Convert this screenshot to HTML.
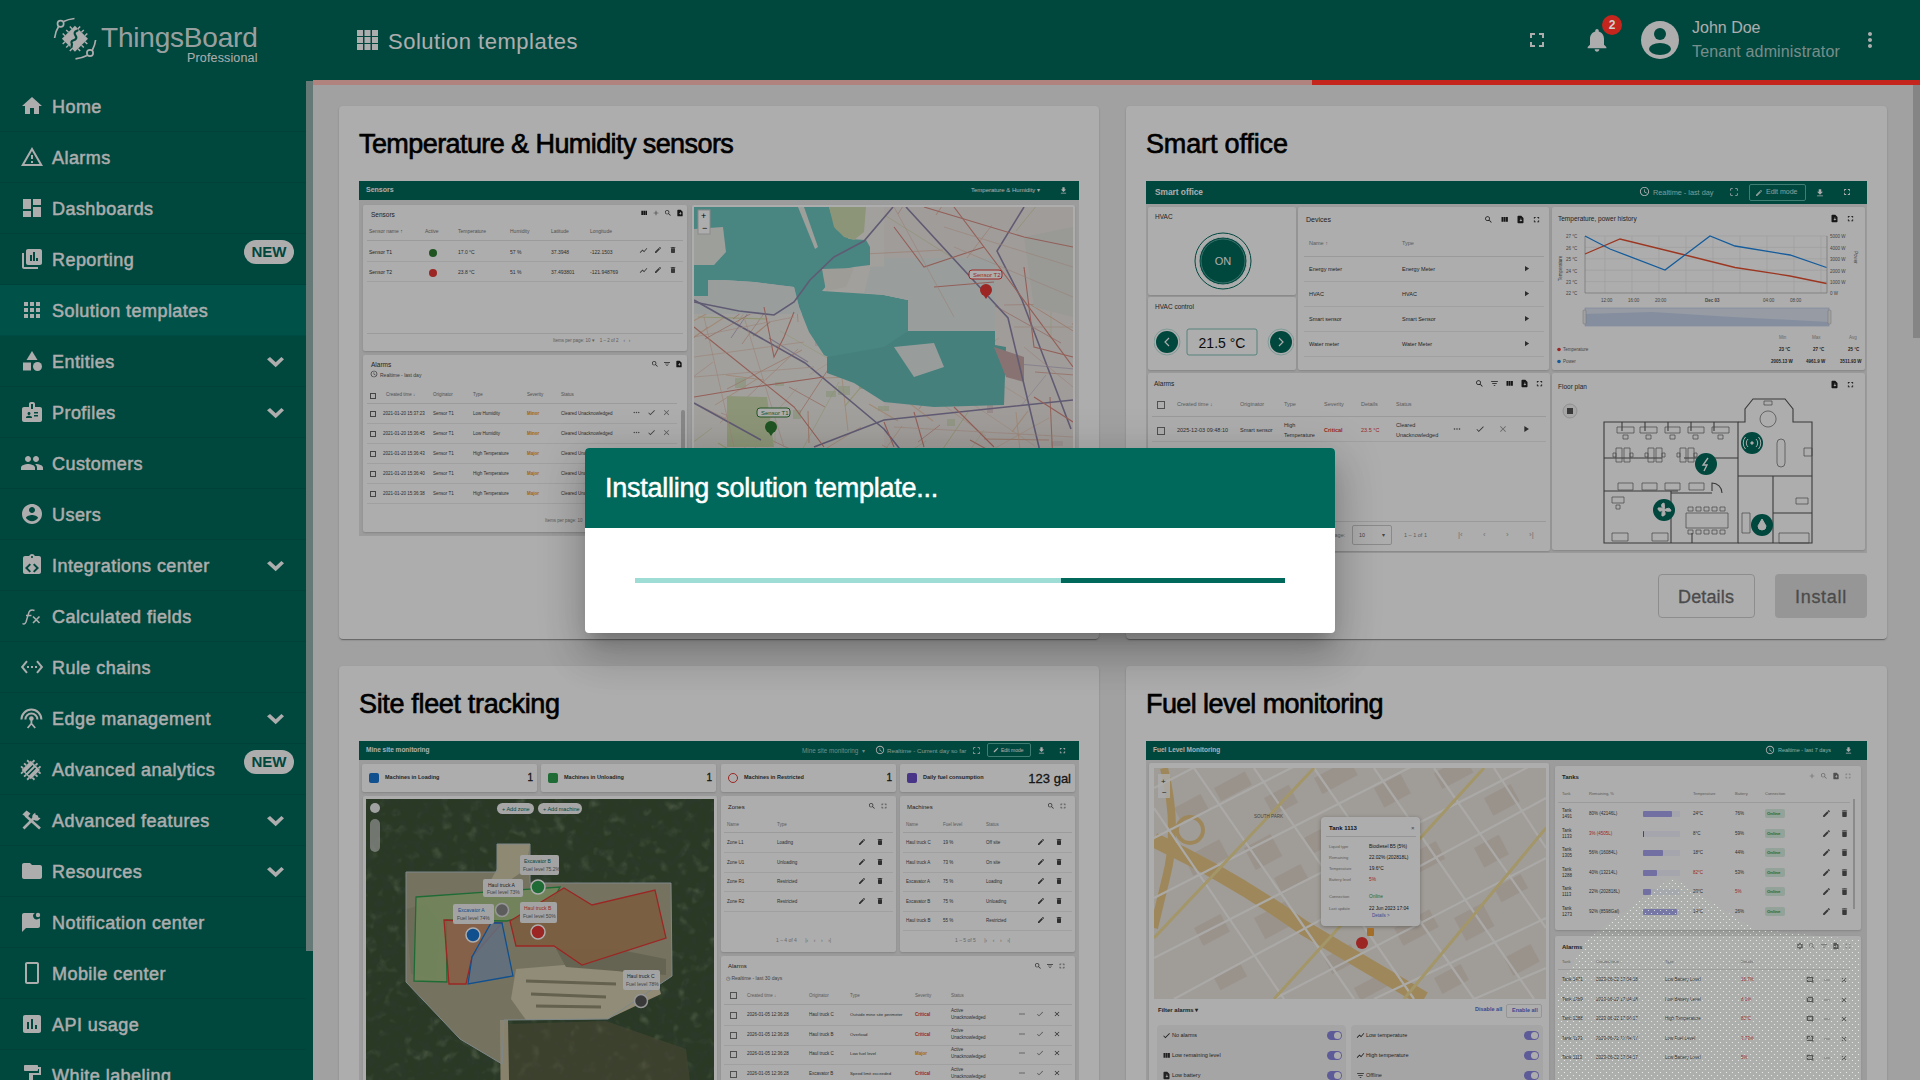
<!DOCTYPE html>
<html><head><meta charset="utf-8">
<style>
*{box-sizing:border-box;margin:0;padding:0}
html,body{width:1920px;height:1080px;overflow:hidden;font-family:"Liberation Sans",sans-serif;background:#eeeeee}
.abs{position:absolute}
#hdr{position:absolute;left:0;top:0;width:1920px;height:80px;background:#00695c;color:#fff}
#side{position:absolute;left:0;top:80px;width:306px;height:1000px;background:#00695c;color:#fff;overflow:hidden}
.mi{position:absolute;left:0;width:306px;height:51px;border-bottom:1px solid rgba(0,0,0,0.08)}
.mi .t{position:absolute;left:52px;top:15.5px;font-size:18px;letter-spacing:0.45px;-webkit-text-stroke:0.45px #fff;white-space:nowrap}
.mi svg{position:absolute;left:20px;top:13px;width:24px;height:24px;fill:#fff}
.mi .chev{left:263px;top:14px}
.new{position:absolute;left:244px;top:6px;width:50px;height:24px;border-radius:12px;background:#fff;color:#00695c;font-size:15px;font-weight:bold;text-align:center;line-height:24px}
#sscroll{position:absolute;left:306px;top:80px;width:7px;height:1000px;background:#00695c}
#sthumb{position:absolute;left:306px;top:81px;width:7px;height:870px;background:#96b4af}
#content{position:absolute;left:313px;top:80px;width:1607px;height:1000px;background:#eeeeee;overflow:hidden}
#prog{position:absolute;left:313px;top:80px;width:1607px;height:5px;background:#b0837f}
#progbar{position:absolute;left:1312px;top:80px;width:608px;height:5px;background:#c4261e}
#mscroll{position:absolute;left:1913px;top:85px;width:7px;height:253px;background:#c4c4c4}
.card{position:absolute;background:#fff;border-radius:4px;box-shadow:0 2px 1px -1px rgba(0,0,0,.2),0 1px 1px 0 rgba(0,0,0,.14),0 1px 3px 0 rgba(0,0,0,.12)}
.ctitle{position:absolute;left:20px;top:23px;font-size:27px;color:#000;white-space:nowrap;-webkit-text-stroke:0.65px #000}
.prev{position:absolute;left:20px;top:75px;background:#e6e6e6;overflow:hidden}
.ph{position:absolute;left:0;top:0;width:100%;background:#00695c;color:#fff;font-weight:bold}
.pan{position:absolute;background:#fff;border-radius:2px;box-shadow:0 1px 2px rgba(0,0,0,.15);overflow:hidden}
.tx{position:absolute;white-space:nowrap;font-size:7px;color:#333}
#overlay{position:absolute;left:0;top:0;width:1920px;height:1080px;background:rgba(0,0,0,0.32)}
#dlg{position:absolute;left:585px;top:448px;width:750px;height:185px;background:#fff;border-radius:4px;overflow:hidden;box-shadow:0 11px 15px -7px rgba(0,0,0,.2),0 24px 38px 3px rgba(0,0,0,.14),0 9px 46px 8px rgba(0,0,0,.12)}
#dlgh{position:absolute;left:0;top:0;width:750px;height:80px;background:#00695c}
#dlgt{position:absolute;left:20px;top:25px;font-size:27px;color:#fff;white-space:nowrap;letter-spacing:-0.25px;-webkit-text-stroke:0.5px #fff}
#dbuf{position:absolute;left:50px;top:130px;width:650px;height:5px;background:#9edcd6}
#dbar{position:absolute;left:476px;top:130px;width:224px;height:5px;background:#00695c}
</style></head><body>

<div id="hdr">
  <!-- logo -->
  <svg class="abs" style="left:52px;top:16px" width="48" height="48" viewBox="0 0 48 48" fill="none" stroke="#fff">
    <circle cx="8.6" cy="7.8" r="3.1" stroke-width="1.7"/>
    <path d="M11.6 5.6 Q16 3.2 22.5 2.5" stroke-width="1.7"/>
    <path d="M6.6 10.6 Q3.6 15 2.6 22" stroke-width="1.7"/>
    <circle cx="38" cy="37" r="3.1" stroke-width="1.7"/>
    <path d="M35 39.4 Q30 42 23.5 42.8" stroke-width="1.7"/>
    <path d="M40.4 34 Q43 29 43.6 24" stroke-width="1.7"/>
    <rect x="13.8" y="13.6" width="18.4" height="18.4" fill="#fff" stroke="none" transform="rotate(45 23 22.75)"/>
    <path d="M33.0 25.7 L35.3 28.0 M29.5 29.3 L31.8 31.5 M26.0 32.8 L28.2 35.1 M20.0 32.8 L17.8 35.1 M16.5 29.3 L14.2 31.5 M13.0 25.7 L10.7 28.0 M13.0 19.8 L10.7 17.5 M16.5 16.2 L14.2 14.0 M20.0 12.7 L17.8 10.4 M26.0 12.7 L28.2 10.4 M29.5 16.2 L31.8 14.0 M33.0 19.8 L35.3 17.5" stroke-width="1.5"/>
    <path d="M25.5 14.5 Q21 16 23.5 19.5 Q26 23 21 24.5 Q18.5 25.5 20 28 L19.5 31" stroke="#00695c" stroke-width="2.2" stroke-linecap="round"/>
  </svg>
  <div class="abs" style="left:101px;top:22px;font-size:28px;letter-spacing:-0.2px;color:rgba(255,255,255,0.9);white-space:nowrap">ThingsBoard</div>
  <div class="abs" style="left:187px;top:51px;font-size:12.5px;letter-spacing:0.15px;color:#fff;white-space:nowrap">Professional</div>
  <!-- title -->
  <svg class="abs" style="left:357px;top:30px" width="21" height="20" viewBox="0 0 21 20" fill="#fff">
    <rect x="0" y="0" width="6" height="6"/><rect x="7.5" y="0" width="6" height="6"/><rect x="15" y="0" width="6" height="6"/>
    <rect x="0" y="7" width="6" height="6"/><rect x="7.5" y="7" width="6" height="6"/><rect x="15" y="7" width="6" height="6"/>
    <rect x="0" y="14" width="6" height="6"/><rect x="7.5" y="14" width="6" height="6"/><rect x="15" y="14" width="6" height="6"/>
  </svg>
  <div class="abs" style="left:388px;top:29px;font-size:22px;letter-spacing:0.5px;color:#fff;white-space:nowrap">Solution templates</div>
  <!-- fullscreen -->
  <svg class="abs" style="left:1525px;top:28px" width="24" height="24" viewBox="0 0 24 24" fill="#fff"><path d="M7 14H5v5h5v-2H7v-3zm-2-4h2V7h3V5H5v5zm12 7h-3v2h5v-5h-2v3zM14 5v2h3v3h2V5h-5z"/></svg>
  <!-- bell -->
  <svg class="abs" style="left:1583px;top:26px" width="28" height="28" viewBox="0 0 24 24" fill="#fff"><path d="M12 22c1.1 0 2-.9 2-2h-4c0 1.1.89 2 2 2zm6-6v-5c0-3.07-1.64-5.64-4.5-6.32V4c0-.83-.67-1.5-1.5-1.5s-1.5.67-1.5 1.5v.68C7.63 5.36 6 7.92 6 11v5l-2 2v1h16v-1l-2-2z"/></svg>
  
  <!-- avatar -->
  <svg class="abs" style="left:1640px;top:20px" width="40" height="40" viewBox="0 0 40 40"><circle cx="20" cy="20" r="19" fill="#fff"/><circle cx="20" cy="14" r="6" fill="#00695c"/><ellipse cx="20" cy="29" rx="11" ry="6" fill="#00695c"/></svg>
  <div class="abs" style="left:1692px;top:19px;font-size:16px;color:#fff;white-space:nowrap">John Doe</div>
  <div class="abs" style="left:1692px;top:43px;font-size:16px;letter-spacing:0.15px;color:rgba(255,255,255,0.7);white-space:nowrap">Tenant administrator</div>
  <svg class="abs" style="left:1858px;top:28px" width="24" height="24" viewBox="0 0 24 24" fill="#fff"><path d="M12 8c1.1 0 2-.9 2-2s-.9-2-2-2-2 .9-2 2 .9 2 2 2zm0 2c-1.1 0-2 .9-2 2s.9 2 2 2 2-.9 2-2-.9-2-2-2zm0 6c-1.1 0-2 .9-2 2s.9 2 2 2 2-.9 2-2-.9-2-2-2z"/></svg>
</div>

<div id="side">
<div class="mi" style="top:1px"><svg viewBox="0 0 24 24"><path d="M10 20v-6h4v6h5v-8h3L12 3 2 12h3v8z"/></svg><div class="t">Home</div></div>
<div class="mi" style="top:52px"><svg viewBox="0 0 24 24"><path d="M12 5.99L19.53 19H4.47L12 5.99M12 2L1 21h22L12 2zm1 14h-2v2h2v-2zm0-6h-2v4h2v-4z"/></svg><div class="t">Alarms</div></div>
<div class="mi" style="top:103px"><svg viewBox="0 0 24 24"><path d="M3 13h8V3H3v10zm0 8h8v-6H3v6zm10 0h8V11h-8v10zm0-18v6h8V3h-8z"/></svg><div class="t">Dashboards</div></div>
<div class="mi" style="top:154px"><svg viewBox="0 0 24 24"><path d="M4 6H2v14c0 1.1.9 2 2 2h14v-2H4V6zm16-4H8c-1.1 0-2 .9-2 2v12c0 1.1.9 2 2 2h12c1.1 0 2-.9 2-2V4c0-1.1-.9-2-2-2zm-8 12h-2V8h2v6zm3 0h-2V5h2v9zm3 0h-2v-3h2v3z"/></svg><div class="t">Reporting</div><div class="new">NEW</div></div>
<div class="mi" style="top:205px;background:#00796b"><svg viewBox="0 0 24 24"><path d="M4 8h4V4H4v4zm6 12h4v-4h-4v4zm-6 0h4v-4H4v4zm0-6h4v-4H4v4zm6 0h4v-4h-4v4zm6-10v4h4V4h-4zm-6 4h4V4h-4v4zm6 6h4v-4h-4v4zm0 6h4v-4h-4v4z"/></svg><div class="t">Solution templates</div></div>
<div class="mi" style="top:256px"><svg viewBox="0 0 24 24"><path d="M12 2l-5.5 9h11z"/><circle cx="17.5" cy="17.5" r="4.5"/><path d="M3 13.5h8v8H3z"/></svg><div class="t">Entities</div><svg class="chev" viewBox="0 0 24 24"><path d="M4 9.3L7 7L12.7 12.2L18.4 7L21 9.3L12.7 17.2Z"/></svg></div>
<div class="mi" style="top:307px"><svg viewBox="0 0 24 24"><path d="M20 7h-5V4c0-1.1-.9-2-2-2h-2c-1.1 0-2 .9-2 2v3H4c-1.1 0-2 .9-2 2v11c0 1.1.9 2 2 2h16c1.1 0 2-.9 2-2V9c0-1.1-.9-2-2-2zM9 12c.83 0 1.5.67 1.5 1.5S9.83 15 9 15s-1.5-.67-1.5-1.5S8.17 12 9 12zm3 6H6v-.75c0-1 2-1.5 3-1.5s3 .5 3 1.5V18zm1-9h-2V4h2v5zm5 7.5h-4V15h4v1.5zm0-3h-4V12h4v1.5z"/></svg><div class="t">Profiles</div><svg class="chev" viewBox="0 0 24 24"><path d="M4 9.3L7 7L12.7 12.2L18.4 7L21 9.3L12.7 17.2Z"/></svg></div>
<div class="mi" style="top:358px"><svg viewBox="0 0 24 24"><path d="M16 11c1.66 0 2.99-1.34 2.99-3S17.66 5 16 5c-1.66 0-3 1.34-3 3s1.34 3 3 3zm-8 0c1.66 0 2.99-1.34 2.99-3S9.66 5 8 5C6.34 5 5 6.34 5 8s1.34 3 3 3zm0 2c-2.33 0-7 1.17-7 3.5V19h14v-2.5c0-2.33-4.67-3.5-7-3.5zm8 0c-.29 0-.62.02-.97.05 1.16.84 1.97 1.97 1.97 3.45V19h6v-2.5c0-2.33-4.67-3.5-7-3.5z"/></svg><div class="t">Customers</div></div>
<div class="mi" style="top:409px"><svg viewBox="0 0 24 24"><path d="M12 2C6.48 2 2 6.48 2 12s4.48 10 10 10 10-4.48 10-10S17.52 2 12 2zm0 3c1.66 0 3 1.34 3 3s-1.34 3-3 3-3-1.34-3-3 1.34-3 3-3zm0 14.2c-2.5 0-4.71-1.28-6-3.22.03-1.99 4-3.08 6-3.08 1.99 0 5.97 1.09 6 3.08-1.29 1.94-3.5 3.22-6 3.22z"/></svg><div class="t">Users</div></div>
<div class="mi" style="top:460px"><svg viewBox="0 0 24 24"><path d="M19 3h-4.18C14.4 1.84 13.3 1 12 1c-1.3 0-2.4.84-2.82 2H5c-1.1 0-2 .9-2 2v14c0 1.1.9 2 2 2h14c1.1 0 2-.9 2-2V5c0-1.1-.9-2-2-2zm-8 15.17l-1.41 1.41L5 15l4.59-4.59L11 11.83 7.83 15 11 18.17zm3.41 1.42L13 18.17 16.17 15 13 11.83l1.41-1.42L19 15l-4.59 4.59zM12 5c-.55 0-1-.45-1-1s.45-1 1-1 1 .45 1 1-.45 1-1 1z"/></svg><div class="t">Integrations center</div><svg class="chev" viewBox="0 0 24 24"><path d="M4 9.3L7 7L12.7 12.2L18.4 7L21 9.3L12.7 17.2Z"/></svg></div>
<div class="mi" style="top:511px"><svg viewBox="0 0 24 24"><path d="M2.5 19.5 Q4.5 21 6 18 L9 8 Q10.5 5 14.5 6.5 M6 11.5 H11.5" fill="none" stroke="#fff" stroke-width="1.5"/><path d="M13 12.5 L19.5 19 M19.5 12.5 L13 19" fill="none" stroke="#fff" stroke-width="1.6"/></svg><div class="t">Calculated fields</div></div>
<div class="mi" style="top:562px"><svg viewBox="0 0 24 24"><path d="M7.77 6.76L6.23 5.48.82 12l5.41 6.52 1.54-1.28L3.42 12l4.35-5.24zM7 13h2v-2H7v2zm10-2h-2v2h2v-2zm-6 2h2v-2h-2v2zm6.77-7.52l-1.54 1.28L20.58 12l-4.35 5.24 1.54 1.28L23.18 12l-5.41-6.52z"/></svg><div class="t">Rule chains</div></div>
<div class="mi" style="top:613px"><svg viewBox="0 0 24 24"><path d="M1.4 13.5a10 10 0 0 1 20 0" fill="none" stroke="#fff" stroke-width="2"/><path d="M5.4 13.5a6 6 0 0 1 12 0" fill="none" stroke="#fff" stroke-width="2"/><circle cx="11.4" cy="12.5" r="2.3"/><path d="M11.4 13v4.5L7.6 22M11.4 17.5L15.2 22" fill="none" stroke="#fff" stroke-width="1.8"/></svg><div class="t">Edge management</div><svg class="chev" viewBox="0 0 24 24"><path d="M4 9.3L7 7L12.7 12.2L18.4 7L21 9.3L12.7 17.2Z"/></svg></div>
<div class="mi" style="top:664px"><svg viewBox="0 0 24 24"><g transform="rotate(45 10.8 13)"><rect x="4.3" y="6.5" width="13" height="13"/><path d="M6.5 3.5v3M10.8 3.5v3M15.1 3.5v3M6.5 19.5v3M10.8 19.5v3M15.1 19.5v3M1.3 8.7h3M1.3 13h3M1.3 17.3h3M17.3 8.7h3M17.3 13h3M17.3 17.3h3" stroke="#fff" stroke-width="1.8"/></g><path d="M6 15.5L13 8.5M8.5 18L15.5 11" stroke="#00695c" stroke-width="1.6"/></svg><div class="t">Advanced analytics</div><div class="new">NEW</div></div>
<div class="mi" style="top:715px"><svg viewBox="0 0 24 24"><path d="M5.5 7.5L20 20.5" stroke="#fff" stroke-width="2.6"/><path d="M2.4 6.5L6.5 2.5L10.5 5.5L7 9.5Z"/><path d="M3.5 20.5L15 9" stroke="#fff" stroke-width="2.6"/><path d="M13.2 6.3a4 4 0 0 0 5.6 5.6l1.8-1.8-2-.4-.8-2.2-2.2-.8-.4-2Z"/></svg><div class="t">Advanced features</div><svg class="chev" viewBox="0 0 24 24"><path d="M4 9.3L7 7L12.7 12.2L18.4 7L21 9.3L12.7 17.2Z"/></svg></div>
<div class="mi" style="top:766px"><svg viewBox="0 0 24 24"><path d="M10 4H4c-1.1 0-1.99.9-1.99 2L2 18c0 1.1.9 2 2 2h16c1.1 0 2-.9 2-2V8c0-1.1-.9-2-2-2h-8l-2-2z"/></svg><div class="t">Resources</div><svg class="chev" viewBox="0 0 24 24"><path d="M4 9.3L7 7L12.7 12.2L18.4 7L21 9.3L12.7 17.2Z"/></svg></div>
<div class="mi" style="top:817px"><svg viewBox="0 0 24 24"><path d="M18 9a3 3 0 0 0 2-.8V16c0 1.1-.9 2-2 2H6l-4 4V5c0-1.1.9-2 2-2h11a3 3 0 0 0 3 6z"/><circle cx="18" cy="5" r="2.2"/></svg><div class="t">Notification center</div></div>
<div class="mi" style="top:868px"><svg viewBox="0 0 24 24"><path d="M17 1.01L7 1c-1.1 0-2 .9-2 2v18c0 1.1.9 2 2 2h10c1.1 0 2-.9 2-2V3c0-1.1-.9-1.99-2-1.99zM17 21H7V3h10v18z"/></svg><div class="t">Mobile center</div></div>
<div class="mi" style="top:919px"><svg viewBox="0 0 24 24"><path d="M19 3H5c-1.1 0-2 .9-2 2v14c0 1.1.9 2 2 2h14c1.1 0 2-.9 2-2V5c0-1.1-.9-2-2-2zM9 17H7v-7h2v7zm4 0h-2V7h2v10zm4 0h-2v-4h2v4z"/></svg><div class="t">API usage</div></div>
<div class="mi" style="top:970px"><svg viewBox="0 0 24 24"><path d="M18 4V3c0-.55-.45-1-1-1H5c-.55 0-1 .45-1 1v4c0 .55.45 1 1 1h12c.55 0 1-.45 1-1V6h1v4H9v11c0 .55.45 1 1 1h2c.55 0 1-.45 1-1v-9h8V4h-3z"/></svg><div class="t">White labeling</div></div>
</div>
<div id="sscroll"></div><div id="sthumb"></div>

<div id="content">
<div class="card" style="left:26px;top:26px;width:760px;height:533px">
<div class="ctitle" style="letter-spacing:-0.58px">Temperature &amp; Humidity sensors</div>
<div class="prev" style="width:720px;height:355px">
<div class="ph" style="height:19px"></div>
<div class="tx" style="left:7px;top:5px;font-size:7px;color:#fff;font-weight:bold;">Sensors</div>
<div class="tx" style="left:612px;top:5px;font-size:6px;color:#fff;">Temperature &amp; Humidity ▾</div>
<svg class="abs" style="left:700px;top:5px" width="9" height="9" viewBox="0 0 24 24"><path d="M19 9h-4V3H9v6H5l7 7 7-7zM5 18v2h14v-2H5z" fill="#fff"/></svg>
<div class="pan" style="left:4px;top:24px;width:324px;height:146px">
<div class="tx" style="left:8px;top:6px;font-size:6.5px;color:#333;">Sensors</div>
<svg class="abs" style="left:277px;top:4px" width="8" height="8" viewBox="0 0 24 24"><path d="M10 18h5V5h-5v13zm-6 0h5V5H4v13zM16 5v13h5V5h-5z" fill="#222"/></svg>
<svg class="abs" style="left:289px;top:4px" width="8" height="8" viewBox="0 0 24 24"><path d="M19 13h-6v6h-2v-6H5v-2h6V5h2v6h6v2z" fill="#555"/></svg>
<svg class="abs" style="left:301px;top:4px" width="8" height="8" viewBox="0 0 24 24"><path d="M15.5 14h-.79l-.28-.27C15.41 12.59 16 11.11 16 9.5 16 5.91 13.09 3 9.5 3S3 5.91 3 9.5 5.91 16 9.5 16c1.61 0 3.09-.59 4.23-1.57l.27.28v.79l5 4.99L20.49 19l-4.99-5zm-6 0C7.01 14 5 11.99 5 9.5S7.01 5 9.5 5 14 7.01 14 9.5 11.99 14 9.5 14z" fill="#333"/></svg>
<svg class="abs" style="left:313px;top:4px" width="8" height="8" viewBox="0 0 24 24"><path d="M14 2H6c-1.1 0-2 .9-2 2v16c0 1.1.9 2 2 2h12c1.1 0 2-.9 2-2V8l-6-6zm-1 15l-4-4h3V9h2v4h3l-4 4z" fill="#222"/></svg>
<div class="tx" style="left:6px;top:23px;font-size:5px;color:#777;">Sensor name ↑</div>
<div class="tx" style="left:62px;top:23px;font-size:5px;color:#777;">Active</div>
<div class="tx" style="left:95px;top:23px;font-size:5px;color:#777;">Temperature</div>
<div class="tx" style="left:147px;top:23px;font-size:5px;color:#777;">Humidity</div>
<div class="tx" style="left:188px;top:23px;font-size:5px;color:#777;">Latitude</div>
<div class="tx" style="left:227px;top:23px;font-size:5px;color:#777;">Longitude</div>
<div class="abs" style="left:4px;top:35px;width:316px;height:1px;background:#e5e5e5"></div>
<div class="tx" style="left:6px;top:44px;font-size:5px;color:#333;">Sensor T1</div>
<div class="abs" style="left:66px;top:44px;width:8px;height:8px;background:#2e7d32;border-radius:50%"></div>
<div class="tx" style="left:95px;top:44px;font-size:5px;color:#444;">17.0 °C</div>
<div class="tx" style="left:147px;top:44px;font-size:5px;color:#444;">57 %</div>
<div class="tx" style="left:188px;top:44px;font-size:5px;color:#444;">37.3948</div>
<div class="tx" style="left:227px;top:44px;font-size:5px;color:#444;">-122.1503</div>
<svg class="abs" style="left:276px;top:41px" width="9" height="9" viewBox="0 0 24 24"><path d="M3.5 18.49l6-6.01 4 4L22 6.92l-1.41-1.41-7.09 7.97-4-4L2 16.99z" fill="#555"/></svg>
<svg class="abs" style="left:291px;top:41px" width="8" height="8" viewBox="0 0 24 24"><path d="M3 17.25V21h3.75L17.81 9.94l-3.75-3.75L3 17.25zM20.71 7.04c.39-.39.39-1.02 0-1.41l-2.34-2.34c-.39-.39-1.02-.39-1.41 0l-1.83 1.83 3.75 3.75 1.83-1.83z" fill="#555"/></svg>
<svg class="abs" style="left:306px;top:41px" width="8" height="8" viewBox="0 0 24 24"><path d="M6 19c0 1.1.9 2 2 2h8c1.1 0 2-.9 2-2V7H6v12zM19 4h-3.5l-1-1h-5l-1 1H5v2h14V4z" fill="#555"/></svg>
<div class="abs" style="left:4px;top:56px;width:316px;height:1px;background:#ececec"></div>
<div class="tx" style="left:6px;top:64px;font-size:5px;color:#333;">Sensor T2</div>
<div class="abs" style="left:66px;top:64px;width:8px;height:8px;background:#e53935;border-radius:50%"></div>
<div class="tx" style="left:95px;top:64px;font-size:5px;color:#444;">23.8 °C</div>
<div class="tx" style="left:147px;top:64px;font-size:5px;color:#444;">51 %</div>
<div class="tx" style="left:188px;top:64px;font-size:5px;color:#444;">37.493801</div>
<div class="tx" style="left:227px;top:64px;font-size:5px;color:#444;">-121.948769</div>
<svg class="abs" style="left:276px;top:61px" width="9" height="9" viewBox="0 0 24 24"><path d="M3.5 18.49l6-6.01 4 4L22 6.92l-1.41-1.41-7.09 7.97-4-4L2 16.99z" fill="#555"/></svg>
<svg class="abs" style="left:291px;top:61px" width="8" height="8" viewBox="0 0 24 24"><path d="M3 17.25V21h3.75L17.81 9.94l-3.75-3.75L3 17.25zM20.71 7.04c.39-.39.39-1.02 0-1.41l-2.34-2.34c-.39-.39-1.02-.39-1.41 0l-1.83 1.83 3.75 3.75 1.83-1.83z" fill="#555"/></svg>
<svg class="abs" style="left:306px;top:61px" width="8" height="8" viewBox="0 0 24 24"><path d="M6 19c0 1.1.9 2 2 2h8c1.1 0 2-.9 2-2V7H6v12zM19 4h-3.5l-1-1h-5l-1 1H5v2h14V4z" fill="#555"/></svg>
<div class="abs" style="left:4px;top:76px;width:316px;height:1px;background:#ececec"></div>
<div class="abs" style="left:4px;top:128px;width:316px;height:1px;background:#e5e5e5"></div>
<div class="tx" style="left:190px;top:133px;font-size:4.5px;color:#888;">Items per page: 10 ▾ &nbsp;&nbsp; 1 – 2 of 2 &nbsp;&nbsp; ‹ &nbsp; ›</div>
</div>
<div class="pan" style="left:4px;top:174px;width:324px;height:177px">
<div class="tx" style="left:8px;top:6px;font-size:6.5px;color:#333;">Alarms</div>
<svg class="abs" style="left:7px;top:15px" width="8" height="8" viewBox="0 0 24 24"><path d="M11.99 2C6.47 2 2 6.48 2 12s4.47 10 9.99 10C17.52 22 22 17.52 22 12S17.52 2 11.99 2zM12 20c-4.42 0-8-3.58-8-8s3.58-8 8-8 8 3.58 8 8-3.58 8-8 8zm.5-13H11v6l5.25 3.15.75-1.23-4.5-2.67z" fill="#444"/></svg>
<div class="tx" style="left:17px;top:17px;font-size:5px;color:#555;">Realtime - last day</div>
<svg class="abs" style="left:288px;top:5px" width="8" height="8" viewBox="0 0 24 24"><path d="M15.5 14h-.79l-.28-.27C15.41 12.59 16 11.11 16 9.5 16 5.91 13.09 3 9.5 3S3 5.91 3 9.5 5.91 16 9.5 16c1.61 0 3.09-.59 4.23-1.57l.27.28v.79l5 4.99L20.49 19l-4.99-5zm-6 0C7.01 14 5 11.99 5 9.5S7.01 5 9.5 5 14 7.01 14 9.5 11.99 14 9.5 14z" fill="#333"/></svg>
<svg class="abs" style="left:300px;top:5px" width="8" height="8" viewBox="0 0 24 24"><path d="M10 18h4v-2h-4v2zM3 6v2h18V6H3zm3 7h12v-2H6v2z" fill="#333"/></svg>
<svg class="abs" style="left:312px;top:5px" width="8" height="8" viewBox="0 0 24 24"><path d="M14 2H6c-1.1 0-2 .9-2 2v16c0 1.1.9 2 2 2h12c1.1 0 2-.9 2-2V8l-6-6zm-1 15l-4-4h3V9h2v4h3l-4 4z" fill="#222"/></svg>
<div class="tx" style="left:23px;top:37px;font-size:4.5px;color:#777;">Created time ↓</div>
<div class="tx" style="left:70px;top:37px;font-size:4.5px;color:#777;">Originator</div>
<div class="tx" style="left:110px;top:37px;font-size:4.5px;color:#777;">Type</div>
<div class="tx" style="left:164px;top:37px;font-size:4.5px;color:#777;">Severity</div>
<div class="tx" style="left:198px;top:37px;font-size:4.5px;color:#777;">Status</div>
<div class="abs" style="left:7px;top:38px;width:6px;height:6px;border:1px solid #666"></div>
<div class="abs" style="left:4px;top:48px;width:310px;height:1px;background:#e5e5e5"></div>
<div class="abs" style="left:7px;top:56px;width:6px;height:6px;border:1px solid #666"></div>
<div class="tx" style="left:20px;top:56px;font-size:4.5px;color:#444;">2021-01-20 15:37:23</div>
<div class="tx" style="left:70px;top:56px;font-size:4.5px;color:#444;">Sensor T1</div>
<div class="tx" style="left:110px;top:56px;font-size:4.5px;color:#444;">Low Humidity</div>
<div class="tx" style="left:164px;top:56px;font-size:4.5px;color:#f29900;font-weight:bold;">Minor</div>
<div class="tx" style="left:198px;top:56px;font-size:4.5px;color:#444;">Cleared Unacknowledged</div>
<svg class="abs" style="left:269px;top:53px" width="9" height="9" viewBox="0 0 24 24"><path d="M6 10c-1.1 0-2 .9-2 2s.9 2 2 2 2-.9 2-2-.9-2-2-2zm12 0c-1.1 0-2 .9-2 2s.9 2 2 2 2-.9 2-2-.9-2-2-2zm-6 0c-1.1 0-2 .9-2 2s.9 2 2 2 2-.9 2-2-.9-2-2-2z" fill="#666"/></svg>
<svg class="abs" style="left:284px;top:53px" width="9" height="9" viewBox="0 0 24 24"><path d="M9 16.17L4.83 12l-1.42 1.41L9 19 21 7l-1.41-1.41z" fill="#666"/></svg>
<svg class="abs" style="left:299px;top:53px" width="9" height="9" viewBox="0 0 24 24"><path d="M19 6.41L17.59 5 12 10.59 6.41 5 5 6.41 10.59 12 5 17.59 6.41 19 12 13.41 17.59 19 19 17.59 13.41 12z" fill="#888"/></svg>
<div class="abs" style="left:4px;top:68px;width:310px;height:1px;background:#ececec"></div>
<div class="abs" style="left:7px;top:76px;width:6px;height:6px;border:1px solid #666"></div>
<div class="tx" style="left:20px;top:76px;font-size:4.5px;color:#444;">2021-01-20 15:36:45</div>
<div class="tx" style="left:70px;top:76px;font-size:4.5px;color:#444;">Sensor T1</div>
<div class="tx" style="left:110px;top:76px;font-size:4.5px;color:#444;">Low Humidity</div>
<div class="tx" style="left:164px;top:76px;font-size:4.5px;color:#f29900;font-weight:bold;">Minor</div>
<div class="tx" style="left:198px;top:76px;font-size:4.5px;color:#444;">Cleared Unacknowledged</div>
<svg class="abs" style="left:269px;top:73px" width="9" height="9" viewBox="0 0 24 24"><path d="M6 10c-1.1 0-2 .9-2 2s.9 2 2 2 2-.9 2-2-.9-2-2-2zm12 0c-1.1 0-2 .9-2 2s.9 2 2 2 2-.9 2-2-.9-2-2-2zm-6 0c-1.1 0-2 .9-2 2s.9 2 2 2 2-.9 2-2-.9-2-2-2z" fill="#666"/></svg>
<svg class="abs" style="left:284px;top:73px" width="9" height="9" viewBox="0 0 24 24"><path d="M9 16.17L4.83 12l-1.42 1.41L9 19 21 7l-1.41-1.41z" fill="#666"/></svg>
<svg class="abs" style="left:299px;top:73px" width="9" height="9" viewBox="0 0 24 24"><path d="M19 6.41L17.59 5 12 10.59 6.41 5 5 6.41 10.59 12 5 17.59 6.41 19 12 13.41 17.59 19 19 17.59 13.41 12z" fill="#888"/></svg>
<div class="abs" style="left:4px;top:88px;width:310px;height:1px;background:#ececec"></div>
<div class="abs" style="left:7px;top:96px;width:6px;height:6px;border:1px solid #666"></div>
<div class="tx" style="left:20px;top:96px;font-size:4.5px;color:#444;">2021-01-20 15:36:43</div>
<div class="tx" style="left:70px;top:96px;font-size:4.5px;color:#444;">Sensor T1</div>
<div class="tx" style="left:110px;top:96px;font-size:4.5px;color:#444;">High Temperature</div>
<div class="tx" style="left:164px;top:96px;font-size:4.5px;color:#f29900;font-weight:bold;">Major</div>
<div class="tx" style="left:198px;top:96px;font-size:4.5px;color:#444;">Cleared Unacknowledged</div>
<svg class="abs" style="left:269px;top:93px" width="9" height="9" viewBox="0 0 24 24"><path d="M6 10c-1.1 0-2 .9-2 2s.9 2 2 2 2-.9 2-2-.9-2-2-2zm12 0c-1.1 0-2 .9-2 2s.9 2 2 2 2-.9 2-2-.9-2-2-2zm-6 0c-1.1 0-2 .9-2 2s.9 2 2 2 2-.9 2-2-.9-2-2-2z" fill="#666"/></svg>
<svg class="abs" style="left:284px;top:93px" width="9" height="9" viewBox="0 0 24 24"><path d="M9 16.17L4.83 12l-1.42 1.41L9 19 21 7l-1.41-1.41z" fill="#666"/></svg>
<svg class="abs" style="left:299px;top:93px" width="9" height="9" viewBox="0 0 24 24"><path d="M19 6.41L17.59 5 12 10.59 6.41 5 5 6.41 10.59 12 5 17.59 6.41 19 12 13.41 17.59 19 19 17.59 13.41 12z" fill="#888"/></svg>
<div class="abs" style="left:4px;top:108px;width:310px;height:1px;background:#ececec"></div>
<div class="abs" style="left:7px;top:116px;width:6px;height:6px;border:1px solid #666"></div>
<div class="tx" style="left:20px;top:116px;font-size:4.5px;color:#444;">2021-01-20 15:36:40</div>
<div class="tx" style="left:70px;top:116px;font-size:4.5px;color:#444;">Sensor T1</div>
<div class="tx" style="left:110px;top:116px;font-size:4.5px;color:#444;">High Temperature</div>
<div class="tx" style="left:164px;top:116px;font-size:4.5px;color:#f29900;font-weight:bold;">Major</div>
<div class="tx" style="left:198px;top:116px;font-size:4.5px;color:#444;">Cleared Unacknowledged</div>
<svg class="abs" style="left:269px;top:113px" width="9" height="9" viewBox="0 0 24 24"><path d="M6 10c-1.1 0-2 .9-2 2s.9 2 2 2 2-.9 2-2-.9-2-2-2zm12 0c-1.1 0-2 .9-2 2s.9 2 2 2 2-.9 2-2-.9-2-2-2zm-6 0c-1.1 0-2 .9-2 2s.9 2 2 2 2-.9 2-2-.9-2-2-2z" fill="#666"/></svg>
<svg class="abs" style="left:284px;top:113px" width="9" height="9" viewBox="0 0 24 24"><path d="M9 16.17L4.83 12l-1.42 1.41L9 19 21 7l-1.41-1.41z" fill="#666"/></svg>
<svg class="abs" style="left:299px;top:113px" width="9" height="9" viewBox="0 0 24 24"><path d="M19 6.41L17.59 5 12 10.59 6.41 5 5 6.41 10.59 12 5 17.59 6.41 19 12 13.41 17.59 19 19 17.59 13.41 12z" fill="#888"/></svg>
<div class="abs" style="left:4px;top:128px;width:310px;height:1px;background:#ececec"></div>
<div class="abs" style="left:7px;top:136px;width:6px;height:6px;border:1px solid #666"></div>
<div class="tx" style="left:20px;top:136px;font-size:4.5px;color:#444;">2021-01-20 15:36:38</div>
<div class="tx" style="left:70px;top:136px;font-size:4.5px;color:#444;">Sensor T1</div>
<div class="tx" style="left:110px;top:136px;font-size:4.5px;color:#444;">High Temperature</div>
<div class="tx" style="left:164px;top:136px;font-size:4.5px;color:#f29900;font-weight:bold;">Major</div>
<div class="tx" style="left:198px;top:136px;font-size:4.5px;color:#444;">Cleared Unacknowledged</div>
<svg class="abs" style="left:269px;top:133px" width="9" height="9" viewBox="0 0 24 24"><path d="M6 10c-1.1 0-2 .9-2 2s.9 2 2 2 2-.9 2-2-.9-2-2-2zm12 0c-1.1 0-2 .9-2 2s.9 2 2 2 2-.9 2-2-.9-2-2-2zm-6 0c-1.1 0-2 .9-2 2s.9 2 2 2 2-.9 2-2-.9-2-2-2z" fill="#666"/></svg>
<svg class="abs" style="left:284px;top:133px" width="9" height="9" viewBox="0 0 24 24"><path d="M9 16.17L4.83 12l-1.42 1.41L9 19 21 7l-1.41-1.41z" fill="#666"/></svg>
<svg class="abs" style="left:299px;top:133px" width="9" height="9" viewBox="0 0 24 24"><path d="M19 6.41L17.59 5 12 10.59 6.41 5 5 6.41 10.59 12 5 17.59 6.41 19 12 13.41 17.59 19 19 17.59 13.41 12z" fill="#888"/></svg>
<div class="abs" style="left:4px;top:148px;width:310px;height:1px;background:#ececec"></div>
<div class="abs" style="left:318px;top:55px;width:4px;height:115px;background:#c8c8c8;border-radius:2px"></div>
<div class="tx" style="left:182px;top:163px;font-size:4.5px;color:#888;">Items per page: 10</div>
</div>
<div class="pan" style="left:333px;top:24px;width:383px;height:330px">
<svg class="abs" style="left:2px;top:2px" width="379" height="326" viewBox="0 0 379 326">
<rect width="379" height="326" fill="#efece6"/>
<path d="M190 0 H379 V326 H190 Z" fill="#ece6e2"/>
<g><rect x="282" y="159" width="7" height="8" fill="#e0cfd2" opacity=".7"/><rect x="184" y="199" width="11" height="5" fill="#cfdcb8" opacity=".7"/><rect x="121" y="131" width="7" height="8" fill="#e0cfd2" opacity=".7"/><rect x="81" y="175" width="9" height="4" fill="#cfdcb8" opacity=".7"/><rect x="148" y="308" width="5" height="9" fill="#e0cfd2" opacity=".7"/><rect x="144" y="179" width="12" height="9" fill="#cfdcb8" opacity=".7"/><rect x="204" y="261" width="13" height="7" fill="#cfdcb8" opacity=".7"/><rect x="165" y="176" width="11" height="6" fill="#d9c1c3" opacity=".7"/><rect x="319" y="320" width="10" height="9" fill="#e0cfd2" opacity=".7"/><rect x="214" y="245" width="6" height="7" fill="#d9c1c3" opacity=".7"/><rect x="99" y="203" width="8" height="9" fill="#cfdcb8" opacity=".7"/><rect x="285" y="82" width="6" height="4" fill="#e0cfd2" opacity=".7"/><rect x="20" y="73" width="6" height="10" fill="#d9c1c3" opacity=".7"/><rect x="286" y="65" width="5" height="5" fill="#d9c1c3" opacity=".7"/><rect x="179" y="314" width="9" height="6" fill="#cfdcb8" opacity=".7"/><rect x="64" y="244" width="6" height="9" fill="#cfdcb8" opacity=".7"/><rect x="41" y="171" width="11" height="10" fill="#cfdcb8" opacity=".7"/><rect x="357" y="234" width="12" height="5" fill="#e0cfd2" opacity=".7"/><rect x="293" y="196" width="6" height="10" fill="#d9c1c3" opacity=".7"/><rect x="132" y="184" width="10" height="6" fill="#cfdcb8" opacity=".7"/><rect x="312" y="317" width="11" height="9" fill="#e0cfd2" opacity=".7"/><rect x="58" y="218" width="11" height="8" fill="#e0cfd2" opacity=".7"/><rect x="294" y="287" width="10" height="6" fill="#d9c1c3" opacity=".7"/><rect x="315" y="299" width="7" height="7" fill="#e0cfd2" opacity=".7"/><rect x="253" y="212" width="8" height="7" fill="#cfdcb8" opacity=".7"/></g><g fill="none"><path d="M242 8 L266 -27" stroke="#e3b3a0" stroke-width="0.8"/><path d="M281 178 L253 195" stroke="#e8c4a8" stroke-width="0.5"/><path d="M192 9 L270 58" stroke="#c9d49a" stroke-width="0.5"/><path d="M170 91 L209 113" stroke="#c9d49a" stroke-width="0.6"/><path d="M105 70 L139 16" stroke="#dca394" stroke-width="0.6"/><path d="M229 263 L270 267" stroke="#c9d49a" stroke-width="0.5"/><path d="M209 270 L152 296" stroke="#e8c4a8" stroke-width="0.8"/><path d="M26 216 L104 142" stroke="#e3b3a0" stroke-width="0.6"/><path d="M105 207 L139 155" stroke="#dca394" stroke-width="0.8"/><path d="M355 211 L287 249" stroke="#e8c4a8" stroke-width="0.5"/><path d="M175 88 L224 96" stroke="#dca394" stroke-width="0.5"/><path d="M87 10 L108 -18" stroke="#dca394" stroke-width="0.5"/><path d="M248 129 L302 134" stroke="#e8c4a8" stroke-width="0.8"/><path d="M213 86 L143 130" stroke="#dca394" stroke-width="0.5"/><path d="M378 45 L393 14" stroke="#e3b3a0" stroke-width="0.5"/><path d="M238 258 L274 205" stroke="#c9d49a" stroke-width="0.8"/><path d="M95 180 L131 200" stroke="#dca394" stroke-width="0.8"/><path d="M129 96 L231 150" stroke="#dca394" stroke-width="0.8"/><path d="M289 166 L337 196" stroke="#e8c4a8" stroke-width="0.5"/><path d="M142 53 L65 87" stroke="#c9d49a" stroke-width="0.5"/><path d="M42 118 L71 75" stroke="#e3b3a0" stroke-width="0.5"/><path d="M277 266 L240 285" stroke="#c9d49a" stroke-width="0.8"/><path d="M63 172 L21 198" stroke="#e8c4a8" stroke-width="0.8"/><path d="M118 324 L229 331" stroke="#c9d49a" stroke-width="0.5"/><path d="M94 21 L139 44" stroke="#e8c4a8" stroke-width="0.5"/><path d="M27 206 L58 218" stroke="#dca394" stroke-width="0.5"/><path d="M195 91 L214 54" stroke="#c9d49a" stroke-width="0.5"/><path d="M297 263 L380 296" stroke="#dca394" stroke-width="0.6"/><path d="M156 282 L260 339" stroke="#e3b3a0" stroke-width="0.5"/><path d="M153 111 L196 128" stroke="#c9d49a" stroke-width="0.5"/><path d="M160 91 L190 112" stroke="#e3b3a0" stroke-width="0.5"/><path d="M247 176 L341 239" stroke="#e8c4a8" stroke-width="0.5"/><path d="M154 157 L183 122" stroke="#e3b3a0" stroke-width="0.6"/><path d="M101 256 L145 175" stroke="#c9d49a" stroke-width="0.5"/><path d="M72 71 L142 107" stroke="#dca394" stroke-width="0.5"/><path d="M19 155 L-74 225" stroke="#e3b3a0" stroke-width="0.5"/><path d="M26 22 L128 74" stroke="#e8c4a8" stroke-width="0.8"/><path d="M225 202 L272 136" stroke="#dca394" stroke-width="0.6"/><path d="M77 233 L115 251" stroke="#dca394" stroke-width="0.6"/><path d="M120 245 L202 271" stroke="#e3b3a0" stroke-width="0.5"/><path d="M204 165 L292 229" stroke="#e8c4a8" stroke-width="0.6"/><path d="M108 143 L33 182" stroke="#e3b3a0" stroke-width="0.8"/><path d="M310 98 L419 96" stroke="#dca394" stroke-width="0.5"/><path d="M337 242 L414 277" stroke="#dca394" stroke-width="0.5"/><path d="M261 278 L165 336" stroke="#e3b3a0" stroke-width="0.5"/><path d="M240 270 L335 300" stroke="#dca394" stroke-width="0.5"/><path d="M281 180 L303 147" stroke="#e8c4a8" stroke-width="0.8"/><path d="M14 120 L-19 145" stroke="#dca394" stroke-width="0.6"/><path d="M341 260 L382 286" stroke="#e8c4a8" stroke-width="0.8"/><path d="M39 254 L103 181" stroke="#e8c4a8" stroke-width="0.5"/><path d="M370 264 L410 177" stroke="#dca394" stroke-width="0.6"/><path d="M304 282 L396 324" stroke="#e3b3a0" stroke-width="0.6"/><path d="M331 280 L434 325" stroke="#dca394" stroke-width="0.6"/><path d="M311 284 L355 301" stroke="#dca394" stroke-width="0.6"/><path d="M328 315 L372 254" stroke="#dca394" stroke-width="0.5"/><path d="M44 316 L146 376" stroke="#e3b3a0" stroke-width="0.5"/><path d="M226 113 L298 18" stroke="#e3b3a0" stroke-width="0.6"/><path d="M341 62 L367 77" stroke="#e8c4a8" stroke-width="0.6"/><path d="M163 309 L222 241" stroke="#e3b3a0" stroke-width="0.8"/><path d="M341 165 L407 170" stroke="#dca394" stroke-width="0.8"/><path d="M48 137 L113 47" stroke="#dca394" stroke-width="0.6"/><path d="M208 0 L263 -84" stroke="#dca394" stroke-width="0.6"/><path d="M167 220 L73 278" stroke="#e8c4a8" stroke-width="0.8"/><path d="M32 168 L70 173" stroke="#e8c4a8" stroke-width="0.8"/><path d="M118 263 L166 281" stroke="#c9d49a" stroke-width="0.8"/><path d="M322 24 L374 -40" stroke="#c9d49a" stroke-width="0.6"/><path d="M151 48 L249 43" stroke="#e3b3a0" stroke-width="0.6"/><path d="M83 262 L117 266" stroke="#e8c4a8" stroke-width="0.5"/><path d="M173 261 L253 270" stroke="#dca394" stroke-width="0.6"/><path d="M232 234 L138 294" stroke="#c9d49a" stroke-width="0.5"/></g>
<g fill="none"><path d="M153 132 L166 111" stroke="#d3dba6" stroke-width="0.5"/><path d="M356 190 L359 257" stroke="#d99a8c" stroke-width="1.1"/><path d="M327 199 L352 168" stroke="#b9aec9" stroke-width="0.5"/><path d="M178 154 L214 175" stroke="#b9aec9" stroke-width="0.5"/><path d="M175 197 L204 214" stroke="#ebcbb0" stroke-width="1.1"/><path d="M226 308 L236 289" stroke="#d3dba6" stroke-width="1.1"/><path d="M31 110 L-5 133" stroke="#ebcbb0" stroke-width="1.1"/><path d="M76 18 L106 -25" stroke="#ebcbb0" stroke-width="0.9"/><path d="M357 103 L357 132" stroke="#d3dba6" stroke-width="0.5"/><path d="M37 131 L79 69" stroke="#b9aec9" stroke-width="0.9"/><path d="M292 276 L326 300" stroke="#e6b8a2" stroke-width="0.9"/><path d="M4 110 L74 112" stroke="#d3dba6" stroke-width="1.1"/><path d="M157 112 L208 149" stroke="#d3dba6" stroke-width="1.1"/><path d="M87 74 L39 112" stroke="#d99a8c" stroke-width="0.7"/><path d="M290 232 L355 233" stroke="#e6b8a2" stroke-width="1.1"/><path d="M160 23 L96 58" stroke="#d3dba6" stroke-width="0.7"/><path d="M352 298 L421 308" stroke="#ebcbb0" stroke-width="0.9"/><path d="M144 294 L145 340" stroke="#d3dba6" stroke-width="0.9"/><path d="M336 247 L309 263" stroke="#ebcbb0" stroke-width="0.9"/><path d="M249 282 L290 223" stroke="#d3dba6" stroke-width="0.5"/><path d="M43 90 L-26 128" stroke="#ebcbb0" stroke-width="1.1"/><path d="M354 291 L405 293" stroke="#b9aec9" stroke-width="0.9"/><path d="M76 115 L59 129" stroke="#e6b8a2" stroke-width="1.1"/><path d="M114 204 L115 236" stroke="#e6b8a2" stroke-width="1.1"/><path d="M151 199 L199 142" stroke="#d3dba6" stroke-width="1.1"/><path d="M213 117 L243 72" stroke="#d3dba6" stroke-width="0.7"/><path d="M313 156 L392 163" stroke="#b9aec9" stroke-width="0.7"/><path d="M378 117 L437 115" stroke="#e6b8a2" stroke-width="0.9"/><path d="M240 188 L279 124" stroke="#d3dba6" stroke-width="0.5"/><path d="M18 221 L-19 249" stroke="#d3dba6" stroke-width="0.7"/><path d="M305 131 L285 143" stroke="#ebcbb0" stroke-width="0.7"/><path d="M266 282 L288 297" stroke="#ebcbb0" stroke-width="0.7"/><path d="M57 269 L129 268" stroke="#ebcbb0" stroke-width="0.7"/><path d="M129 171 L160 170" stroke="#e6b8a2" stroke-width="0.7"/><path d="M188 238 L254 274" stroke="#e6b8a2" stroke-width="0.7"/><path d="M215 196 L239 214" stroke="#ebcbb0" stroke-width="1.1"/><path d="M141 101 L218 97" stroke="#ebcbb0" stroke-width="0.5"/><path d="M334 96 L392 132" stroke="#e6b8a2" stroke-width="0.9"/><path d="M62 290 L-5 329" stroke="#d3dba6" stroke-width="0.9"/><path d="M231 254 L294 297" stroke="#d3dba6" stroke-width="1.1"/><path d="M194 74 L196 97" stroke="#ebcbb0" stroke-width="0.9"/><path d="M62 193 L61 263" stroke="#ebcbb0" stroke-width="0.7"/><path d="M238 298 L266 261" stroke="#e6b8a2" stroke-width="0.5"/><path d="M191 318 L221 334" stroke="#d3dba6" stroke-width="0.7"/><path d="M181 177 L210 131" stroke="#ebcbb0" stroke-width="0.5"/><path d="M165 279 L208 219" stroke="#ebcbb0" stroke-width="0.9"/><path d="M64 279 L69 313" stroke="#ebcbb0" stroke-width="1.1"/><path d="M150 147 L115 168" stroke="#ebcbb0" stroke-width="0.5"/><path d="M301 99 L367 136" stroke="#d99a8c" stroke-width="0.7"/><path d="M102 83 L104 115" stroke="#d99a8c" stroke-width="0.5"/><path d="M60 254 L66 301" stroke="#e6b8a2" stroke-width="0.9"/><path d="M88 287 L164 283" stroke="#d3dba6" stroke-width="0.7"/><path d="M204 7 L226 -27" stroke="#d99a8c" stroke-width="0.5"/><path d="M244 245 L310 289" stroke="#d99a8c" stroke-width="1.1"/><path d="M161 250 L128 274" stroke="#e6b8a2" stroke-width="0.9"/><path d="M201 98 L180 113" stroke="#d99a8c" stroke-width="0.7"/><path d="M81 213 L81 238" stroke="#d3dba6" stroke-width="0.5"/><path d="M280 270 L355 273" stroke="#d99a8c" stroke-width="0.7"/><path d="M229 296 L265 322" stroke="#ebcbb0" stroke-width="0.5"/><path d="M224 265 L202 277" stroke="#e6b8a2" stroke-width="0.5"/><path d="M213 294 L247 244" stroke="#b9aec9" stroke-width="0.5"/><path d="M7 71 L49 91" stroke="#d99a8c" stroke-width="0.7"/><path d="M318 225 L334 204" stroke="#ebcbb0" stroke-width="1.1"/><path d="M146 153 L154 224" stroke="#ebcbb0" stroke-width="0.9"/><path d="M276 233 L314 254" stroke="#d99a8c" stroke-width="1.1"/><path d="M82 251 L52 269" stroke="#d99a8c" stroke-width="0.7"/><path d="M174 168 L195 141" stroke="#d99a8c" stroke-width="0.5"/><path d="M86 124 L144 157" stroke="#d3dba6" stroke-width="0.5"/><path d="M4 198 L69 230" stroke="#e6b8a2" stroke-width="0.7"/><path d="M113 263 L71 295" stroke="#ebcbb0" stroke-width="0.5"/><path d="M234 318 L256 284" stroke="#e6b8a2" stroke-width="1.1"/><path d="M246 218 L224 235" stroke="#d99a8c" stroke-width="0.7"/><path d="M322 205 L327 253" stroke="#ebcbb0" stroke-width="0.9"/><path d="M211 275 L214 296" stroke="#b9aec9" stroke-width="0.9"/><path d="M58 106 L11 132" stroke="#d99a8c" stroke-width="0.7"/><path d="M210 272 L241 294" stroke="#d99a8c" stroke-width="1.1"/><path d="M75 131 L114 155" stroke="#b9aec9" stroke-width="1.1"/><path d="M141 308 L116 328" stroke="#d99a8c" stroke-width="0.7"/><path d="M24 307 L-22 339" stroke="#b9aec9" stroke-width="0.5"/><path d="M229 324 L206 340" stroke="#ebcbb0" stroke-width="0.9"/><path d="M368 271 L412 299" stroke="#ebcbb0" stroke-width="0.7"/><path d="M156 153 L181 155" stroke="#d99a8c" stroke-width="0.5"/><path d="M340 244 L374 248" stroke="#b9aec9" stroke-width="0.5"/><path d="M48 23 L25 38" stroke="#d99a8c" stroke-width="0.5"/><path d="M24 236 L75 266" stroke="#d3dba6" stroke-width="1.1"/><path d="M241 262 L251 340" stroke="#d3dba6" stroke-width="0.7"/><path d="M337 299 L342 369" stroke="#e6b8a2" stroke-width="0.5"/><path d="M114 252 L118 294" stroke="#d3dba6" stroke-width="0.7"/><path d="M108 300 L153 331" stroke="#d99a8c" stroke-width="0.7"/><path d="M253 86 L261 156" stroke="#d3dba6" stroke-width="1.1"/></g>
<path d="M0 0 H135 L142 22 L155 32 L172 33 L176 40 L176 58 L160 60 L150 62 L140 70 L128 84 L190 88 L214 93 L214 124 L190 160 L150 158 L130 148 L115 125 L105 100 L100 80 L60 75 L29 73 L0 73 Z" fill="#6cc4bf"/>
<path d="M0 22 L29 20 L32 45 L20 58 L0 58 Z" fill="#e8eae5"/>
<path d="M104 0 L110 0 L124 40 L121 42 Z" fill="#e8eae5"/>
<path d="M135 0 H172 L170 25 L160 33 L150 30 L140 20 Z" fill="#cfdcb0"/>
<path d="M176 60 L214 58 L214 93 L190 88 L170 86 L176 62 Z" fill="#e2e9e8"/>
<path d="M128 62 L160 61 L152 80 L132 84 Z" fill="#e8e6de"/>
<path d="M0 73 L29 73 L60 75 L100 80 L105 100 L108 107 L0 107 Z" fill="#e2e9e8"/>
<path d="M0 73 L14 73 L14 89 L0 89 Z" fill="#6cc4bf"/>
<path d="M190 51 L301 51 L301 124 L214 124 L214 93 L190 88 Z" fill="#e2e9e8"/>
<path d="M133 150 L190 140 L214 124 L301 124 L301 138 L312 140 L310 198 L240 200 L190 195 L160 176 L133 166 Z" fill="#66bdb7"/>
<path d="M200 140 L240 136 L250 160 L220 170 Z" fill="#e0e8e6"/>
<path d="M300 140 L330 150 L330 175 L312 170 Z" fill="#c9a9a9"/>
<path d="M33 189 L73 190 L80 240 L33 240 Z" fill="#cfdcb0"/>
<path d="M330 30 L379 20 L379 110 L340 100 Z" fill="#e2e2dc"/>
<g fill="none" stroke="#8e86aa" stroke-width="1.6">
<path d="M0 95 L45 104 L80 108 L100 95 L116 73 L140 50 L170 34 L199 0"/>
<path d="M0 93 L111 156 L190 222 L220 260"/>
<path d="M0 196 L67 233"/>
<path d="M212 0 L314 111 L345 240 L350 326"/>
<path d="M330 0 L303 44 L328 93 L377 222"/>
<path d="M120 240 L190 213 L379 193"/>
</g>
<g fill="none" stroke="#d98c82" stroke-width="1.1">
<path d="M0 120 L100 200 L130 240"/><path d="M70 100 L80 150 L90 130 L100 105"/><path d="M0 190 L60 180 L130 170"/>
<path d="M230 0 L330 30 L379 40"/><path d="M200 20 L230 60 L290 40"/><path d="M260 0 L320 80 L379 160"/>
<path d="M190 215 L200 240 M220 205 L230 240 M260 200 L300 240 M340 190 L379 215"/>
<path d="M330 60 L340 140 L379 150"/><path d="M240 80 L300 75"/>
</g>
<g fill="none" stroke="#e3bfae" stroke-width=".6">
<path d="M0 130 L100 110 M0 150 L110 135 M0 170 L120 160 M10 110 L40 240 M50 110 L90 240 M200 0 L260 110 M250 20 L379 60 M260 40 L379 90 M320 120 L379 120 M330 140 L379 180 M200 220 L379 230"/>
</g>
<rect x="275" y="63" width="33" height="9" rx="3" fill="#fff" stroke="#e53935"/><text x="279" y="70" font-size="6" fill="#e53935" font-family="Liberation Sans">Sensor T2</text>
<circle cx="292" cy="83" r="6" fill="#e53935"/><path d="M288 86 L292 92 L296 86Z" fill="#e53935"/>
<rect x="63" y="201" width="33" height="9" rx="3" fill="#fff" stroke="#2e7d32"/><text x="67" y="208" font-size="6" fill="#2e7d32" font-family="Liberation Sans">Sensor T1</text>
<circle cx="77" cy="220" r="6" fill="#2e7d32"/><path d="M73 223 L77 229 L81 223Z" fill="#2e7d32"/>
<rect x="4" y="3" width="12" height="24" fill="#fff" stroke="#ccc"/><text x="7" y="12" font-size="9" font-family="Liberation Sans">+</text><text x="8" y="24" font-size="9" font-family="Liberation Sans">−</text>
</svg>
</div>
</div>
<div class="abs" style="left:552px;top:469px;width:97px;height:43px;border:1px solid #ccc;border-radius:4px"></div>
<div class="abs" style="left:669px;top:469px;width:72px;height:43px;background:#e0e0e0;border-radius:4px"></div>
</div>
<div class="card" style="left:813px;top:26px;width:761px;height:533px">
<div class="ctitle" style="letter-spacing:-0.15px">Smart office</div>
<div class="prev" style="width:721px;height:372px">
<div class="ph" style="height:23px"></div>
<div class="tx" style="left:9px;top:6px;font-size:8.3px;color:#fff;font-weight:bold;">Smart office</div>
<svg class="abs" style="left:493px;top:5px" width="11" height="11" viewBox="0 0 24 24"><path d="M11.99 2C6.47 2 2 6.48 2 12s4.47 10 9.99 10C17.52 22 22 17.52 22 12S17.52 2 11.99 2zM12 20c-4.42 0-8-3.58-8-8s3.58-8 8-8 8 3.58 8 8-3.58 8-8 8zm.5-13H11v6l5.25 3.15.75-1.23-4.5-2.67z" fill="#fff"/></svg>
<div class="tx" style="left:507px;top:6.5px;font-size:7.3px;color:#bfe0d8;">Realtime - last day</div>
<svg class="abs" style="left:583px;top:6px" width="10" height="10" viewBox="0 0 24 24"><path d="M3 5v4h2V5h4V3H5c-1.1 0-2 .9-2 2zm2 10H3v4c0 1.1.9 2 2 2h4v-2H5v-4zm14 4h-4v2h4c1.1 0 2-.9 2-2v-4h-2v4zm0-16h-4v2h4v4h2V5c0-1.1-.9-2-2-2z" fill="#fff"/></svg>
<div class="abs" style="left:603px;top:3px;width:57px;height:17px;border:1px solid #5fb8a8;border-radius:2px"></div>
<svg class="abs" style="left:609px;top:7.5px" width="8" height="8" viewBox="0 0 24 24"><path d="M3 17.25V21h3.75L17.81 9.94l-3.75-3.75L3 17.25zM20.71 7.04c.39-.39.39-1.02 0-1.41l-2.34-2.34c-.39-.39-1.02-.39-1.41 0l-1.83 1.83 3.75 3.75 1.83-1.83z" fill="#cfe8e0"/></svg>
<div class="tx" style="left:620px;top:6.5px;font-size:7px;color:#cfe8e0;">Edit mode</div>
<svg class="abs" style="left:669px;top:6.5px" width="10" height="10" viewBox="0 0 24 24"><path d="M19 9h-4V3H9v6H5l7 7 7-7zM5 18v2h14v-2H5z" fill="#fff"/></svg>
<svg class="abs" style="left:696px;top:6px" width="10" height="10" viewBox="0 0 24 24"><path d="M7 14H5v5h5v-2H7v-3zm-2-4h2V7h3V5H5v5zm12 7h-3v2h5v-5h-2v3zM14 5v2h3v3h2V5h-5z" fill="#fff"/></svg>
<div class="pan" style="left:2px;top:26px;width:148px;height:88px">
<div class="tx" style="left:7px;top:6px;font-size:6.5px;color:#333;">HVAC</div>
<svg class="abs" style="left:46px;top:25px" width="58" height="58" viewBox="0 0 58 58"><circle cx="29" cy="29" r="28" fill="none" stroke="#00695c" stroke-width="1"/><circle cx="29" cy="29" r="24" fill="#00695c" stroke="#fff" stroke-width="1"/><circle cx="29" cy="29" r="22" fill="none" stroke="#8fd3c9" stroke-width=".6"/><text x="29" y="33" text-anchor="middle" font-family="Liberation Sans" font-size="11" fill="#fff">ON</text></svg>
</div>
<div class="pan" style="left:2px;top:116px;width:148px;height:73px">
<div class="tx" style="left:7px;top:6px;font-size:6.5px;color:#333;">HVAC control</div>
<svg class="abs" style="left:6px;top:30px" width="140" height="30" viewBox="0 0 140 30"><circle cx="13" cy="15" r="13" fill="none" stroke="#8fd3c9" stroke-width=".6"/><circle cx="13" cy="15" r="11" fill="#00695c"/><path d="M15 11 L11 15 L15 19" stroke="#fff" fill="none" stroke-width="1.2"/><circle cx="127" cy="15" r="13" fill="none" stroke="#8fd3c9" stroke-width=".6"/><circle cx="127" cy="15" r="11" fill="#00695c"/><path d="M125 11 L129 15 L125 19" stroke="#fff" fill="none" stroke-width="1.2"/><rect x="33" y="2" width="70" height="26" rx="2" fill="#fff" stroke="#7fc1b8" stroke-width="1"/><text x="68" y="21" text-anchor="middle" font-family="Liberation Sans" font-size="14" fill="#111">21.5 °C</text></svg>
</div>
<div class="pan" style="left:152px;top:26px;width:251px;height:163px">
<div class="tx" style="left:8px;top:9px;font-size:7px;color:#333;">Devices</div>
<svg class="abs" style="left:186px;top:8px" width="9" height="9" viewBox="0 0 24 24"><path d="M15.5 14h-.79l-.28-.27C15.41 12.59 16 11.11 16 9.5 16 5.91 13.09 3 9.5 3S3 5.91 3 9.5 5.91 16 9.5 16c1.61 0 3.09-.59 4.23-1.57l.27.28v.79l5 4.99L20.49 19l-4.99-5zm-6 0C7.01 14 5 11.99 5 9.5S7.01 5 9.5 5 14 7.01 14 9.5 11.99 14 9.5 14z" fill="#222"/></svg>
<svg class="abs" style="left:202px;top:8px" width="9" height="9" viewBox="0 0 24 24"><path d="M10 18h5V5h-5v13zm-6 0h5V5H4v13zM16 5v13h5V5h-5z" fill="#222"/></svg>
<svg class="abs" style="left:218px;top:8px" width="9" height="9" viewBox="0 0 24 24"><path d="M14 2H6c-1.1 0-2 .9-2 2v16c0 1.1.9 2 2 2h12c1.1 0 2-.9 2-2V8l-6-6zm-1 15l-4-4h3V9h2v4h3l-4 4z" fill="#222"/></svg>
<svg class="abs" style="left:234px;top:8px" width="9" height="9" viewBox="0 0 24 24"><path d="M7 14H5v5h5v-2H7v-3zm-2-4h2V7h3V5H5v5zm12 7h-3v2h5v-5h-2v3zM14 5v2h3v3h2V5h-5z" fill="#222"/></svg>
<div class="tx" style="left:11px;top:33px;font-size:5.5px;color:#888;">Name ↑</div>
<div class="tx" style="left:104px;top:33px;font-size:5.5px;color:#888;">Type</div>
<div class="abs" style="left:6px;top:49px;width:240px;height:1px;background:#e3e3e3"></div>
<div class="tx" style="left:11px;top:59px;font-size:5.5px;color:#333;">Energy meter</div>
<div class="tx" style="left:104px;top:59px;font-size:5.5px;color:#333;">Energy Meter</div>
<svg class="abs" style="left:224px;top:57px" width="9" height="9" viewBox="0 0 24 24"><path d="M8 5v14l11-7z" fill="#444"/></svg>
<div class="abs" style="left:6px;top:74px;width:240px;height:1px;background:#ececec"></div>
<div class="tx" style="left:11px;top:84px;font-size:5.5px;color:#333;">HVAC</div>
<div class="tx" style="left:104px;top:84px;font-size:5.5px;color:#333;">HVAC</div>
<svg class="abs" style="left:224px;top:82px" width="9" height="9" viewBox="0 0 24 24"><path d="M8 5v14l11-7z" fill="#444"/></svg>
<div class="abs" style="left:6px;top:99px;width:240px;height:1px;background:#ececec"></div>
<div class="tx" style="left:11px;top:109px;font-size:5.5px;color:#333;">Smart sensor</div>
<div class="tx" style="left:104px;top:109px;font-size:5.5px;color:#333;">Smart Sensor</div>
<svg class="abs" style="left:224px;top:107px" width="9" height="9" viewBox="0 0 24 24"><path d="M8 5v14l11-7z" fill="#444"/></svg>
<div class="abs" style="left:6px;top:124px;width:240px;height:1px;background:#ececec"></div>
<div class="tx" style="left:11px;top:134px;font-size:5.5px;color:#333;">Water meter</div>
<div class="tx" style="left:104px;top:134px;font-size:5.5px;color:#333;">Water Meter</div>
<svg class="abs" style="left:224px;top:132px" width="9" height="9" viewBox="0 0 24 24"><path d="M8 5v14l11-7z" fill="#444"/></svg>
<div class="abs" style="left:6px;top:149px;width:240px;height:1px;background:#ececec"></div>
</div>
<div class="pan" style="left:406px;top:26px;width:313px;height:163px">
<div class="tx" style="left:6px;top:8px;font-size:6.5px;color:#333;">Temperature, power history</div>
<svg class="abs" style="left:278px;top:7px" width="9" height="9" viewBox="0 0 24 24"><path d="M14 2H6c-1.1 0-2 .9-2 2v16c0 1.1.9 2 2 2h12c1.1 0 2-.9 2-2V8l-6-6zm-1 15l-4-4h3V9h2v4h3l-4 4z" fill="#222"/></svg>
<svg class="abs" style="left:294px;top:7px" width="9" height="9" viewBox="0 0 24 24"><path d="M7 14H5v5h5v-2H7v-3zm-2-4h2V7h3V5H5v5zm12 7h-3v2h5v-5h-2v3zM14 5v2h3v3h2V5h-5z" fill="#222"/></svg>
<svg class="abs" style="left:0;top:14px" width="313" height="149" viewBox="0 0 313 149">
<g stroke="#e6e6e6" stroke-width=".6">
<path d="M33 15H275M33 26.4H275M33 37.8H275M33 49.2H275M33 60.6H275"/>
<path d="M53 15V72M80 15V72M107 15V72M134 15V72M161 15V72M188 15V72M215 15V72M242 15V72M269 15V72"/>
</g>
<path d="M33 15V72H275M275 15V72" fill="none" stroke="#999" stroke-width=".6"/>
<g font-family="Liberation Sans" font-size="4.5" fill="#666">
<text x="14" y="17">27 °C</text><text x="14" y="28.5">26 °C</text><text x="14" y="40">25 °C</text><text x="14" y="51.5">24 °C</text><text x="14" y="63">23 °C</text><text x="14" y="74">22 °C</text>
<text x="278" y="17">5000 W</text><text x="278" y="28.5">4000 W</text><text x="278" y="40">3000 W</text><text x="278" y="51.5">2000 W</text><text x="278" y="63">1000 W</text><text x="278" y="74">0 W</text>
<text x="49" y="81">12:00</text><text x="76" y="81">16:00</text><text x="103" y="81">20:00</text><text x="153" y="81" font-weight="bold">Dec 03</text><text x="211" y="81">04:00</text><text x="238" y="81">08:00</text>
<text x="227" y="118" fill="#999">Min</text><text x="260" y="118" fill="#999">Max</text><text x="297" y="118" fill="#999">Avg</text>
<text x="11" y="130">Temperature</text><text x="11" y="142">Power</text>
<g font-weight="bold" fill="#333"><text x="227" y="130">23 °C</text><text x="261" y="130">27 °C</text><text x="296" y="130">25 °C</text>
<text x="219" y="142">2005.13 W</text><text x="254" y="142">4961.9 W</text><text x="288" y="142">3511.93 W</text></g>
</g>
<text transform="translate(10,60) rotate(-90)" font-family="Liberation Sans" font-size="4.5" fill="#555">Temperature</text><text transform="translate(302,30) rotate(90)" font-family="Liberation Sans" font-size="4.5" fill="#555">Power</text>
<circle cx="7" cy="128.5" r="1.8" fill="#e53935"/><circle cx="7" cy="140.5" r="1.8" fill="#1e88e5"/>
<polyline points="33,33 68,18 133,34 183,46.5 238,55 274.5,62.5" fill="none" stroke="#e65030" stroke-width="1.3"/>
<polyline points="33,15 58,28 113,49 158,15 183,25 238,34 274.5,46.5" fill="none" stroke="#1e88e5" stroke-width="1.3"/>
<rect x="33" y="87" width="244" height="18" fill="#dde5f2" stroke="#b5c3e0" stroke-width=".6"/>
<path d="M33 105 L33 93 L100 91 L180 96 L277 101 L277 105Z" fill="#c4d1ea"/>
<rect x="31" y="89" width="3" height="14" rx="1" fill="#eee" stroke="#999" stroke-width=".4"/><rect x="276" y="89" width="3" height="14" rx="1" fill="#eee" stroke="#999" stroke-width=".4"/>
</svg>
</div>
<div class="pan" style="left:2px;top:192px;width:402px;height:178px">
<div class="tx" style="left:6px;top:7px;font-size:6.5px;color:#333;">Alarms</div>
<svg class="abs" style="left:327px;top:6px" width="9" height="9" viewBox="0 0 24 24"><path d="M15.5 14h-.79l-.28-.27C15.41 12.59 16 11.11 16 9.5 16 5.91 13.09 3 9.5 3S3 5.91 3 9.5 5.91 16 9.5 16c1.61 0 3.09-.59 4.23-1.57l.27.28v.79l5 4.99L20.49 19l-4.99-5zm-6 0C7.01 14 5 11.99 5 9.5S7.01 5 9.5 5 14 7.01 14 9.5 11.99 14 9.5 14z" fill="#222"/></svg>
<svg class="abs" style="left:342px;top:6px" width="9" height="9" viewBox="0 0 24 24"><path d="M10 18h4v-2h-4v2zM3 6v2h18V6H3zm3 7h12v-2H6v2z" fill="#222"/></svg>
<svg class="abs" style="left:357px;top:6px" width="9" height="9" viewBox="0 0 24 24"><path d="M10 18h5V5h-5v13zm-6 0h5V5H4v13zM16 5v13h5V5h-5z" fill="#222"/></svg>
<svg class="abs" style="left:372px;top:6px" width="9" height="9" viewBox="0 0 24 24"><path d="M14 2H6c-1.1 0-2 .9-2 2v16c0 1.1.9 2 2 2h12c1.1 0 2-.9 2-2V8l-6-6zm-1 15l-4-4h3V9h2v4h3l-4 4z" fill="#222"/></svg>
<svg class="abs" style="left:387px;top:6px" width="9" height="9" viewBox="0 0 24 24"><path d="M7 14H5v5h5v-2H7v-3zm-2-4h2V7h3V5H5v5zm12 7h-3v2h5v-5h-2v3zM14 5v2h3v3h2V5h-5z" fill="#222"/></svg>
<div class="abs" style="left:9px;top:28px;width:8px;height:8px;border:1px solid #777"></div>
<div class="tx" style="left:29px;top:28px;font-size:5.5px;color:#888;">Created time ↓</div>
<div class="tx" style="left:92px;top:28px;font-size:5.5px;color:#888;">Originator</div>
<div class="tx" style="left:136px;top:28px;font-size:5.5px;color:#888;">Type</div>
<div class="tx" style="left:176px;top:28px;font-size:5.5px;color:#888;">Severity</div>
<div class="tx" style="left:213px;top:28px;font-size:5.5px;color:#888;">Details</div>
<div class="tx" style="left:248px;top:28px;font-size:5.5px;color:#888;">Status</div>
<div class="abs" style="left:4px;top:43px;width:394px;height:1px;background:#e3e3e3"></div>
<div class="abs" style="left:9px;top:54px;width:8px;height:8px;border:1px solid #777"></div>
<div class="tx" style="left:29px;top:54px;font-size:5.5px;color:#444;">2025-12-03 09:48:10</div>
<div class="tx" style="left:92px;top:54px;font-size:5.5px;color:#444;">Smart sensor</div>
<div class="tx" style="left:136px;top:49px;font-size:5.5px;color:#444;">High</div>
<div class="tx" style="left:136px;top:59px;font-size:5.5px;color:#444;">Temperature</div>
<div class="tx" style="left:176px;top:54px;font-size:5.5px;color:#e53935;font-weight:bold;">Critical</div>
<div class="tx" style="left:213px;top:54px;font-size:5.5px;color:#e53935;">23.5 °C</div>
<div class="tx" style="left:248px;top:49px;font-size:5.5px;color:#444;">Cleared</div>
<div class="tx" style="left:248px;top:59px;font-size:5.5px;color:#444;">Unacknowledged</div>
<svg class="abs" style="left:304px;top:51px" width="10" height="10" viewBox="0 0 24 24"><path d="M6 10c-1.1 0-2 .9-2 2s.9 2 2 2 2-.9 2-2-.9-2-2-2zm12 0c-1.1 0-2 .9-2 2s.9 2 2 2 2-.9 2-2-.9-2-2-2zm-6 0c-1.1 0-2 .9-2 2s.9 2 2 2 2-.9 2-2-.9-2-2-2z" fill="#555"/></svg>
<svg class="abs" style="left:327px;top:51px" width="10" height="10" viewBox="0 0 24 24"><path d="M9 16.17L4.83 12l-1.42 1.41L9 19 21 7l-1.41-1.41z" fill="#555"/></svg>
<svg class="abs" style="left:350px;top:51px" width="10" height="10" viewBox="0 0 24 24"><path d="M19 6.41L17.59 5 12 10.59 6.41 5 5 6.41 10.59 12 5 17.59 6.41 19 12 13.41 17.59 19 19 17.59 13.41 12z" fill="#999"/></svg>
<svg class="abs" style="left:373px;top:51px" width="10" height="10" viewBox="0 0 24 24"><path d="M8 5v14l11-7z" fill="#444"/></svg>
<div class="abs" style="left:4px;top:68px;width:394px;height:1px;background:#ececec"></div>
<div class="abs" style="left:4px;top:148px;width:394px;height:1px;background:#e3e3e3"></div>
<div class="tx" style="left:174px;top:159px;font-size:5.5px;color:#888;">per page:</div>
<div class="abs" style="left:204px;top:152px;width:40px;height:20px;border:1px solid #ccc;border-radius:2px"></div>
<div class="tx" style="left:211px;top:159px;font-size:5.5px;color:#666;">10</div>
<div class="tx" style="left:234px;top:158px;font-size:6px;color:#666;">▾</div>
<div class="tx" style="left:256px;top:159px;font-size:5.5px;color:#888;">1 – 1 of 1</div>
<div class="tx" style="left:310px;top:157px;font-size:8px;color:#aaa;">|‹</div>
<div class="tx" style="left:335px;top:157px;font-size:8px;color:#aaa;">‹</div>
<div class="tx" style="left:358px;top:157px;font-size:8px;color:#aaa;">›</div>
<div class="tx" style="left:381px;top:157px;font-size:8px;color:#aaa;">›|</div>
</div>
<div class="pan" style="left:406px;top:192px;width:313px;height:177px">
<div class="tx" style="left:6px;top:10px;font-size:6.5px;color:#333;">Floor plan</div>
<svg class="abs" style="left:278px;top:7px" width="9" height="9" viewBox="0 0 24 24"><path d="M14 2H6c-1.1 0-2 .9-2 2v16c0 1.1.9 2 2 2h12c1.1 0 2-.9 2-2V8l-6-6zm-1 15l-4-4h3V9h2v4h3l-4 4z" fill="#222"/></svg>
<svg class="abs" style="left:294px;top:7px" width="9" height="9" viewBox="0 0 24 24"><path d="M7 14H5v5h5v-2H7v-3zm-2-4h2V7h3V5H5v5zm12 7h-3v2h5v-5h-2v3zM14 5v2h3v3h2V5h-5z" fill="#222"/></svg>
<svg class="abs" style="left:0;top:0" width="313" height="177" viewBox="0 0 313 177">
<circle cx="18" cy="38" r="7" fill="#f5f5f5" stroke="#ccc" stroke-width=".8"/><rect x="15" y="35" width="6" height="6" fill="#555"/>
<g fill="none" stroke="#555" stroke-width="1.1">
<path d="M52 49 H186 V170 H52 Z"/>
<path d="M186 49 H193 V36 L201 26 H233 L241 36 V49 H260 V170 H186"/>
<path d="M52 118 H126 M119 118 V170 M119 120 H160 M160 118 V110 A10 10 0 0 1 170 120 M186 103 H260 M221 103 V170 M221 140 H260 M140 170 V160"/>
<path d="M70 49 V58 M93 49 V58 M116 49 V58 M139 49 V58 M162 49 V58"/>
<path d="M52 85 H110 M132 85 H186"/>
</g>
<g fill="none" stroke="#666" stroke-width=".7">
<path d="M65 54h17v6h-17zM88 54h17v6h-17zM113 54h15v6h-15zM136 54h16v6h-16zM160 54h17v6h-17z"/>
<path d="M71 62h5v4h-5zM94 62h5v4h-5zM118 62h5v4h-5zM141 62h5v4h-5zM166 62h5v4h-5z"/>
<path d="M64 75h6v14h-6zM72 75h6v14h-6zM96 75h6v14h-6zM104 75h6v14h-6zM128 75h6v14h-6zM136 75h6v14h-6z"/>
<path d="M61 80h3v4h-3zM78 80h3v4h-3zM93 80h3v4h-3zM110 80h3v4h-3zM125 80h3v4h-3zM142 80h3v4h-3z"/>
<path d="M66 110h15v7h-15zM90 110h15v7h-15zM113 110h15v7h-15zM137 110h15v7h-15z"/>
<path d="M60 124h12v6h-12zM64 132h4v4h-4zM60 160h16v8h-16zM100 160h16v8h-16z"/>
<path d="M134 140h42v15h-42zM136 134h5v4h-5zM144 134h5v4h-5zM152 134h5v4h-5zM160 134h5v4h-5zM168 134h5v4h-5zM136 157h5v4h-5zM144 157h5v4h-5zM152 157h5v4h-5zM160 157h5v4h-5zM168 157h5v4h-5z"/>
<rect x="225" y="66" width="8" height="28" rx="4"/><path d="M216 38 a8 8 0 1 0 .1 0 z M212 28h8v4h-8z M190 140h8v20h-8z M227 160h30v10h-30z M252 75h8v8h-8z M244 125h12v6h-12z"/>
</g>
<circle cx="200" cy="70" r="11" fill="#00695c"/><circle cx="154" cy="91" r="11" fill="#00695c"/><circle cx="112" cy="137" r="11" fill="#00695c"/><circle cx="210" cy="152" r="11" fill="#00695c"/>
<g stroke="#fff" fill="none" stroke-width="1"><circle cx="200" cy="70" r="1.2" fill="#fff"/><path d="M196 66a5.5 5.5 0 0 0 0 8M204 66a5.5 5.5 0 0 1 0 8M193.5 64a9 9 0 0 0 0 12M206.5 64a9 9 0 0 1 0 12"/><path d="M156 85 L151 92 L155 92 L152 98" stroke-width="1.4"/><path d="M112 137 q-5 -6 0 -7 q1 4 0 7 q6 -4 7 1 q-4 1 -7 -1 q3 6 -2 6 q-1 -4 2 -6 q-6 3 -6 -2 q4 -1 6 2" fill="#fff"/><path d="M210 146 L206 153 a4 4 0 0 0 8 0Z" fill="#fff"/></g>
</svg>
</div>
</div>
<div class="abs" style="left:532px;top:468px;width:97px;height:44px;border:1px solid #d0d0d0;border-radius:4px"></div>
<div class="tx" style="left:552px;top:481px;font-size:18px;color:#6f6f6f;letter-spacing:0.15px;-webkit-text-stroke:0.3px #6f6f6f">Details</div>
<div class="abs" style="left:649px;top:468px;width:92px;height:44px;background:#dedede;border-radius:4px"></div>
<div class="tx" style="left:669px;top:481px;font-size:18px;color:#6f6f6f;letter-spacing:0.7px;-webkit-text-stroke:0.3px #6f6f6f">Install</div>
</div>
<div class="card" style="left:26px;top:586px;width:760px;height:532px">
<div class="ctitle" style="letter-spacing:-0.34px">Site fleet tracking</div>
<div class="prev" style="width:720px;height:500px">
<div class="ph" style="height:19px"></div>
<div class="tx" style="left:7px;top:5px;font-size:6.5px;color:#fff;font-weight:bold;">Mine site monitoring</div>
<div class="tx" style="left:443px;top:5.5px;font-size:6.3px;color:#9fd0c4;">Mine site monitoring &nbsp;▾</div>
<svg class="abs" style="left:516px;top:4px" width="10" height="10" viewBox="0 0 24 24"><path d="M11.99 2C6.47 2 2 6.48 2 12s4.47 10 9.99 10C17.52 22 22 17.52 22 12S17.52 2 11.99 2zM12 20c-4.42 0-8-3.58-8-8s3.58-8 8-8 8 3.58 8 8-3.58 8-8 8zm.5-13H11v6l5.25 3.15.75-1.23-4.5-2.67z" fill="#fff"/></svg>
<div class="tx" style="left:528px;top:5.5px;font-size:6.2px;color:#bfe0d8;">Realtime - Current day so far</div>
<svg class="abs" style="left:613px;top:5px" width="9" height="9" viewBox="0 0 24 24"><path d="M3 5v4h2V5h4V3H5c-1.1 0-2 .9-2 2zm2 10H3v4c0 1.1.9 2 2 2h4v-2H5v-4zm14 4h-4v2h4c1.1 0 2-.9 2-2v-4h-2v4zm0-16h-4v2h4v4h2V5c0-1.1-.9-2-2-2z" fill="#fff"/></svg>
<div class="abs" style="left:628px;top:2px;width:44px;height:14px;border:1px solid #5fb8a8;border-radius:2px"></div>
<svg class="abs" style="left:634px;top:6px" width="6" height="6" viewBox="0 0 24 24"><path d="M3 17.25V21h3.75L17.81 9.94l-3.75-3.75L3 17.25zM20.71 7.04c.39-.39.39-1.02 0-1.41l-2.34-2.34c-.39-.39-1.02-.39-1.41 0l-1.83 1.83 3.75 3.75 1.83-1.83z" fill="#fff"/></svg>
<div class="tx" style="left:642px;top:6px;font-size:5px;color:#fff;">Edit mode</div>
<svg class="abs" style="left:678px;top:5px" width="9" height="9" viewBox="0 0 24 24"><path d="M19 9h-4V3H9v6H5l7 7 7-7zM5 18v2h14v-2H5z" fill="#fff"/></svg>
<svg class="abs" style="left:699px;top:5px" width="9" height="9" viewBox="0 0 24 24"><path d="M7 14H5v5h5v-2H7v-3zm-2-4h2V7h3V5H5v5zm12 7h-3v2h5v-5h-2v3zM14 5v2h3v3h2V5h-5z" fill="#fff"/></svg>
<div class="pan" style="left:3px;top:23px;width:175px;height:28px">
<div class="abs" style="left:7px;top:9px;width:10px;height:10px;background:#1976d2;border-radius:2px"></div>
<div class="tx" style="left:23px;top:10px;font-size:5.5px;color:#333;font-weight:bold;">Machines in Loading</div>
<div class="tx" style="right:4px;top:8px;font-size:10px;color:#222;-webkit-text-stroke:0.3px #222">1</div>
</div>
<div class="pan" style="left:182px;top:23px;width:175px;height:28px">
<div class="abs" style="left:7px;top:9px;width:10px;height:10px;background:#2e9e4f;border-radius:2px"></div>
<div class="tx" style="left:23px;top:10px;font-size:5.5px;color:#333;font-weight:bold;">Machines in Unloading</div>
<div class="tx" style="right:4px;top:8px;font-size:10px;color:#222;-webkit-text-stroke:0.3px #222">1</div>
</div>
<div class="pan" style="left:362px;top:23px;width:175px;height:28px">
<div class="abs" style="left:7px;top:9px;width:10px;height:10px;border:1.6px solid #e53935;border-radius:50%"></div>
<div class="tx" style="left:23px;top:10px;font-size:5.5px;color:#333;font-weight:bold;">Machines in Restricted</div>
<div class="tx" style="right:4px;top:8px;font-size:10px;color:#222;-webkit-text-stroke:0.3px #222">1</div>
</div>
<div class="pan" style="left:541px;top:23px;width:175px;height:28px">
<div class="abs" style="left:7px;top:9px;width:10px;height:10px;background:#6a4fc8;border-radius:2px"></div>
<div class="tx" style="left:23px;top:10px;font-size:5.5px;color:#333;font-weight:bold;">Daily fuel consumption</div>
<div class="tx" style="right:4px;top:7px;font-size:13px;color:#222;-webkit-text-stroke:0.3px #222">123 gal</div>
</div>
<div class="pan" style="left:4px;top:55px;width:354px;height:460px">
<svg class="abs" style="left:3px;top:3px" width="348" height="454" viewBox="0 0 348 454">
<defs>
<filter id="nz" x="0" y="0" width="100%" height="100%"><feTurbulence type="fractalNoise" baseFrequency="0.12" numOctaves="3" seed="5"/><feColorMatrix values="0 0 0 0 0.05  0 0 0 0 0.09  0 0 0 0 0.05  0 0 0 2.2 -0.75"/></filter>
<filter id="nz2" x="0" y="0" width="100%" height="100%"><feTurbulence type="fractalNoise" baseFrequency="0.08" numOctaves="2" seed="11"/><feColorMatrix values="0 0 0 0 0.42  0 0 0 0 0.52  0 0 0 0 0.36  0 0 0 1.3 -0.72"/></filter>
</defs>
<rect width="348" height="454" fill="#3d5434"/>
<rect width="348" height="454" filter="url(#nz2)"/>
<rect width="348" height="454" filter="url(#nz)"/>
<path d="M40 73 L131 73 L131 45 L164 45 L164 84 L305 84 L306 177 L242 220 L138 221 L136 265 L94 240 L40 183 Z" fill="#aaa283"/>
<path d="M131 45 L164 45 L160 70 L140 84 L120 90 L131 70 Z" fill="#d3c8a3"/>
<path d="M40 110 L60 105 L75 125 L70 180 L45 175 Z" fill="#9b9877"/>
<path d="M150 170 L210 165 L290 178 L295 195 L242 220 L160 221 L145 200 Z" fill="#d6ccab"/>
<path d="M160 182 L250 185 M165 195 L240 198 M170 207 L235 208" stroke="#8c8466" stroke-width="3"/>
<path d="M190 150 L250 150 L300 160 L300 176 L200 168 Z" fill="#8f8a6c"/>
<path d="M140 225 L240 222 L320 250 L330 330 L300 400 L200 454 L140 454 Z" fill="#70694f" fill-opacity=".55"/>
<path d="M134 221 L142 221 L146 454 L136 454 Z" fill="#c9c0a0"/>
<path d="M0 300 L60 290 L120 320 L130 360 L80 380 L0 360 Z" fill="#2b3a25" fill-opacity=".6"/>
<path d="M40 73 L131 73 L131 45 L164 45 L164 84 L305 84 L306 177 L242 220 L138 221 L136 265 L94 240 L40 183 Z" fill="#d0dde0" fill-opacity=".12" stroke="#b9c8cc" stroke-width="1"/>
<path d="M50 98 L194 88 L182 111 L141 122 L80 121 L81 183 L48 182 Z" fill="#a7c885" fill-opacity=".8" stroke="#2e9e4f" stroke-width="1.3"/>
<path d="M78 121 L136 124 L106 158 L100 185 L83 185 Z" fill="#c98a64" fill-opacity=".8" stroke="#e53935" stroke-width="1.3"/>
<path d="M125 124 L136 124 L147 177 L102 185 L106 158 Z" fill="#8ea4bd" fill-opacity=".85" stroke="#1976d2" stroke-width="1.3"/>
<path d="M144 122 L198 89 L226 106 L289 91 L300 139 L216 166 L188 147 L150 147 Z" fill="#b58a5e" fill-opacity=".92" stroke="#e53935" stroke-width="1.3"/>
<g font-family="Liberation Sans" font-size="5">
<rect x="154" y="56" width="39" height="20" rx="2" fill="#f0f0f0"/><text x="158" y="64" fill="#00695c">Excavator B</text><text x="157" y="72" fill="#666">Fuel level 75.2%</text>
<rect x="117" y="80" width="40" height="18" rx="2" fill="#f0f0f0"/><text x="122" y="88" fill="#333">Haul truck A</text><text x="121" y="95" fill="#666">Fuel level 73%</text>
<rect x="87" y="105" width="41" height="20" rx="2" fill="#f0f0f0"/><text x="92" y="113" fill="#1976d2">Excavator A</text><text x="91" y="121" fill="#666">Fuel level 74%</text>
<rect x="154" y="103" width="37" height="21" rx="2" fill="#f0f0f0"/><text x="158" y="111" fill="#e53935">Haul truck B</text><text x="157" y="119" fill="#666">Fuel level 50%</text>
<rect x="257" y="171" width="37" height="20" rx="2" fill="#f0f0f0"/><text x="261" y="179" fill="#333">Haul truck C</text><text x="260" y="187" fill="#666">Fuel level 78%</text>
</g>
<circle cx="172" cy="88" r="7" fill="#2e9e4f" stroke="#fff" stroke-width="1.5"/>
<circle cx="136" cy="111" r="6.5" fill="#888" stroke="#ddd" stroke-width="1.5"/>
<circle cx="107" cy="136" r="7" fill="#1976d2" stroke="#fff" stroke-width="1.5"/>
<circle cx="172" cy="133" r="7" fill="#e53935" stroke="#fff" stroke-width="1.5"/>
<circle cx="275" cy="202" r="6.5" fill="#555" stroke="#ddd" stroke-width="1.5"/>
<circle cx="9" cy="9" r="5" fill="#eee"/><rect x="4" y="20" width="10" height="33" rx="5" fill="#eee" fill-opacity=".6"/>
<rect x="131" y="4" width="37" height="11" rx="5.5" fill="#f5f5f5"/><text x="136" y="12" font-family="Liberation Sans" font-size="5.5" fill="#00695c">+ Add zone</text>
<rect x="172" y="4" width="44" height="11" rx="5.5" fill="#f5f5f5"/><text x="177" y="12" font-family="Liberation Sans" font-size="5.5" fill="#00695c">+ Add machine</text>
</svg>
</div>
<div class="pan" style="left:362px;top:55px;width:175px;height:156px">
<div class="tx" style="left:7px;top:8px;font-size:6px;color:#333;">Zones</div>
<svg class="abs" style="left:147px;top:6px" width="8" height="8" viewBox="0 0 24 24"><path d="M15.5 14h-.79l-.28-.27C15.41 12.59 16 11.11 16 9.5 16 5.91 13.09 3 9.5 3S3 5.91 3 9.5 5.91 16 9.5 16c1.61 0 3.09-.59 4.23-1.57l.27.28v.79l5 4.99L20.49 19l-4.99-5zm-6 0C7.01 14 5 11.99 5 9.5S7.01 5 9.5 5 14 7.01 14 9.5 11.99 14 9.5 14z" fill="#444"/></svg>
<svg class="abs" style="left:159px;top:6px" width="8" height="8" viewBox="0 0 24 24"><path d="M7 14H5v5h5v-2H7v-3zm-2-4h2V7h3V5H5v5zm12 7h-3v2h5v-5h-2v3zM14 5v2h3v3h2V5h-5z" fill="#444"/></svg>
<div class="tx" style="left:6px;top:26px;font-size:4.5px;color:#888;">Name</div>
<div class="tx" style="left:56px;top:26px;font-size:4.5px;color:#888;">Type</div>
<div class="abs" style="left:3px;top:36px;width:169px;height:1px;background:#e5e5e5"></div>
<div class="tx" style="left:6px;top:44.0px;font-size:4.5px;color:#444;">Zone L1</div>
<div class="tx" style="left:56px;top:44.0px;font-size:4.5px;color:#444;">Loading</div>
<svg class="abs" style="left:137px;top:42.0px" width="8" height="8" viewBox="0 0 24 24"><path d="M3 17.25V21h3.75L17.81 9.94l-3.75-3.75L3 17.25zM20.71 7.04c.39-.39.39-1.02 0-1.41l-2.34-2.34c-.39-.39-1.02-.39-1.41 0l-1.83 1.83 3.75 3.75 1.83-1.83z" fill="#444"/></svg>
<svg class="abs" style="left:155px;top:42.0px" width="8" height="8" viewBox="0 0 24 24"><path d="M6 19c0 1.1.9 2 2 2h8c1.1 0 2-.9 2-2V7H6v12zM19 4h-3.5l-1-1h-5l-1 1H5v2h14V4z" fill="#444"/></svg>
<div class="abs" style="left:3px;top:56.0px;width:169px;height:1px;background:#ececec"></div>
<div class="tx" style="left:6px;top:63.5px;font-size:4.5px;color:#444;">Zone U1</div>
<div class="tx" style="left:56px;top:63.5px;font-size:4.5px;color:#444;">Unloading</div>
<svg class="abs" style="left:137px;top:61.5px" width="8" height="8" viewBox="0 0 24 24"><path d="M3 17.25V21h3.75L17.81 9.94l-3.75-3.75L3 17.25zM20.71 7.04c.39-.39.39-1.02 0-1.41l-2.34-2.34c-.39-.39-1.02-.39-1.41 0l-1.83 1.83 3.75 3.75 1.83-1.83z" fill="#444"/></svg>
<svg class="abs" style="left:155px;top:61.5px" width="8" height="8" viewBox="0 0 24 24"><path d="M6 19c0 1.1.9 2 2 2h8c1.1 0 2-.9 2-2V7H6v12zM19 4h-3.5l-1-1h-5l-1 1H5v2h14V4z" fill="#444"/></svg>
<div class="abs" style="left:3px;top:75.5px;width:169px;height:1px;background:#ececec"></div>
<div class="tx" style="left:6px;top:83.0px;font-size:4.5px;color:#444;">Zone R1</div>
<div class="tx" style="left:56px;top:83.0px;font-size:4.5px;color:#444;">Restricted</div>
<svg class="abs" style="left:137px;top:81.0px" width="8" height="8" viewBox="0 0 24 24"><path d="M3 17.25V21h3.75L17.81 9.94l-3.75-3.75L3 17.25zM20.71 7.04c.39-.39.39-1.02 0-1.41l-2.34-2.34c-.39-.39-1.02-.39-1.41 0l-1.83 1.83 3.75 3.75 1.83-1.83z" fill="#444"/></svg>
<svg class="abs" style="left:155px;top:81.0px" width="8" height="8" viewBox="0 0 24 24"><path d="M6 19c0 1.1.9 2 2 2h8c1.1 0 2-.9 2-2V7H6v12zM19 4h-3.5l-1-1h-5l-1 1H5v2h14V4z" fill="#444"/></svg>
<div class="abs" style="left:3px;top:95.0px;width:169px;height:1px;background:#ececec"></div>
<div class="tx" style="left:6px;top:102.5px;font-size:4.5px;color:#444;">Zone R2</div>
<div class="tx" style="left:56px;top:102.5px;font-size:4.5px;color:#444;">Restricted</div>
<svg class="abs" style="left:137px;top:100.5px" width="8" height="8" viewBox="0 0 24 24"><path d="M3 17.25V21h3.75L17.81 9.94l-3.75-3.75L3 17.25zM20.71 7.04c.39-.39.39-1.02 0-1.41l-2.34-2.34c-.39-.39-1.02-.39-1.41 0l-1.83 1.83 3.75 3.75 1.83-1.83z" fill="#444"/></svg>
<svg class="abs" style="left:155px;top:100.5px" width="8" height="8" viewBox="0 0 24 24"><path d="M6 19c0 1.1.9 2 2 2h8c1.1 0 2-.9 2-2V7H6v12zM19 4h-3.5l-1-1h-5l-1 1H5v2h14V4z" fill="#444"/></svg>
<div class="abs" style="left:3px;top:114.5px;width:169px;height:1px;background:#ececec"></div>
<div class="tx" style="left:55px;top:141px;font-size:5px;color:#999;">1 – 4 of 4 &nbsp;&nbsp;&nbsp;&nbsp; |‹ &nbsp;&nbsp; ‹ &nbsp;&nbsp; › &nbsp;&nbsp; ›|</div>
</div>
<div class="pan" style="left:541px;top:55px;width:175px;height:156px">
<div class="tx" style="left:7px;top:8px;font-size:6px;color:#333;">Machines</div>
<svg class="abs" style="left:147px;top:6px" width="8" height="8" viewBox="0 0 24 24"><path d="M15.5 14h-.79l-.28-.27C15.41 12.59 16 11.11 16 9.5 16 5.91 13.09 3 9.5 3S3 5.91 3 9.5 5.91 16 9.5 16c1.61 0 3.09-.59 4.23-1.57l.27.28v.79l5 4.99L20.49 19l-4.99-5zm-6 0C7.01 14 5 11.99 5 9.5S7.01 5 9.5 5 14 7.01 14 9.5 11.99 14 9.5 14z" fill="#444"/></svg>
<svg class="abs" style="left:159px;top:6px" width="8" height="8" viewBox="0 0 24 24"><path d="M7 14H5v5h5v-2H7v-3zm-2-4h2V7h3V5H5v5zm12 7h-3v2h5v-5h-2v3zM14 5v2h3v3h2V5h-5z" fill="#444"/></svg>
<div class="tx" style="left:6px;top:26px;font-size:4.5px;color:#888;">Name</div>
<div class="tx" style="left:43px;top:26px;font-size:4.5px;color:#888;">Fuel level</div>
<div class="tx" style="left:86px;top:26px;font-size:4.5px;color:#888;">Status</div>
<div class="abs" style="left:3px;top:36px;width:169px;height:1px;background:#e5e5e5"></div>
<div class="tx" style="left:6px;top:44.0px;font-size:4.5px;color:#444;">Haul truck C</div>
<div class="tx" style="left:43px;top:44.0px;font-size:4.5px;color:#444;">19 %</div>
<div class="tx" style="left:86px;top:44.0px;font-size:4.5px;color:#444;">Off site</div>
<svg class="abs" style="left:137px;top:42.0px" width="8" height="8" viewBox="0 0 24 24"><path d="M3 17.25V21h3.75L17.81 9.94l-3.75-3.75L3 17.25zM20.71 7.04c.39-.39.39-1.02 0-1.41l-2.34-2.34c-.39-.39-1.02-.39-1.41 0l-1.83 1.83 3.75 3.75 1.83-1.83z" fill="#444"/></svg>
<svg class="abs" style="left:155px;top:42.0px" width="8" height="8" viewBox="0 0 24 24"><path d="M6 19c0 1.1.9 2 2 2h8c1.1 0 2-.9 2-2V7H6v12zM19 4h-3.5l-1-1h-5l-1 1H5v2h14V4z" fill="#444"/></svg>
<div class="abs" style="left:3px;top:56.0px;width:169px;height:1px;background:#ececec"></div>
<div class="tx" style="left:6px;top:63.5px;font-size:4.5px;color:#444;">Haul truck A</div>
<div class="tx" style="left:43px;top:63.5px;font-size:4.5px;color:#444;">73 %</div>
<div class="tx" style="left:86px;top:63.5px;font-size:4.5px;color:#444;">On site</div>
<svg class="abs" style="left:137px;top:61.5px" width="8" height="8" viewBox="0 0 24 24"><path d="M3 17.25V21h3.75L17.81 9.94l-3.75-3.75L3 17.25zM20.71 7.04c.39-.39.39-1.02 0-1.41l-2.34-2.34c-.39-.39-1.02-.39-1.41 0l-1.83 1.83 3.75 3.75 1.83-1.83z" fill="#444"/></svg>
<svg class="abs" style="left:155px;top:61.5px" width="8" height="8" viewBox="0 0 24 24"><path d="M6 19c0 1.1.9 2 2 2h8c1.1 0 2-.9 2-2V7H6v12zM19 4h-3.5l-1-1h-5l-1 1H5v2h14V4z" fill="#444"/></svg>
<div class="abs" style="left:3px;top:75.5px;width:169px;height:1px;background:#ececec"></div>
<div class="tx" style="left:6px;top:83.0px;font-size:4.5px;color:#444;">Excavator A</div>
<div class="tx" style="left:43px;top:83.0px;font-size:4.5px;color:#444;">75 %</div>
<div class="tx" style="left:86px;top:83.0px;font-size:4.5px;color:#444;">Loading</div>
<svg class="abs" style="left:137px;top:81.0px" width="8" height="8" viewBox="0 0 24 24"><path d="M3 17.25V21h3.75L17.81 9.94l-3.75-3.75L3 17.25zM20.71 7.04c.39-.39.39-1.02 0-1.41l-2.34-2.34c-.39-.39-1.02-.39-1.41 0l-1.83 1.83 3.75 3.75 1.83-1.83z" fill="#444"/></svg>
<svg class="abs" style="left:155px;top:81.0px" width="8" height="8" viewBox="0 0 24 24"><path d="M6 19c0 1.1.9 2 2 2h8c1.1 0 2-.9 2-2V7H6v12zM19 4h-3.5l-1-1h-5l-1 1H5v2h14V4z" fill="#444"/></svg>
<div class="abs" style="left:3px;top:95.0px;width:169px;height:1px;background:#ececec"></div>
<div class="tx" style="left:6px;top:102.5px;font-size:4.5px;color:#444;">Excavator B</div>
<div class="tx" style="left:43px;top:102.5px;font-size:4.5px;color:#444;">75 %</div>
<div class="tx" style="left:86px;top:102.5px;font-size:4.5px;color:#444;">Unloading</div>
<svg class="abs" style="left:137px;top:100.5px" width="8" height="8" viewBox="0 0 24 24"><path d="M3 17.25V21h3.75L17.81 9.94l-3.75-3.75L3 17.25zM20.71 7.04c.39-.39.39-1.02 0-1.41l-2.34-2.34c-.39-.39-1.02-.39-1.41 0l-1.83 1.83 3.75 3.75 1.83-1.83z" fill="#444"/></svg>
<svg class="abs" style="left:155px;top:100.5px" width="8" height="8" viewBox="0 0 24 24"><path d="M6 19c0 1.1.9 2 2 2h8c1.1 0 2-.9 2-2V7H6v12zM19 4h-3.5l-1-1h-5l-1 1H5v2h14V4z" fill="#444"/></svg>
<div class="abs" style="left:3px;top:114.5px;width:169px;height:1px;background:#ececec"></div>
<div class="tx" style="left:6px;top:122.0px;font-size:4.5px;color:#444;">Haul truck B</div>
<div class="tx" style="left:43px;top:122.0px;font-size:4.5px;color:#444;">55 %</div>
<div class="tx" style="left:86px;top:122.0px;font-size:4.5px;color:#444;">Restricted</div>
<svg class="abs" style="left:137px;top:120.0px" width="8" height="8" viewBox="0 0 24 24"><path d="M3 17.25V21h3.75L17.81 9.94l-3.75-3.75L3 17.25zM20.71 7.04c.39-.39.39-1.02 0-1.41l-2.34-2.34c-.39-.39-1.02-.39-1.41 0l-1.83 1.83 3.75 3.75 1.83-1.83z" fill="#444"/></svg>
<svg class="abs" style="left:155px;top:120.0px" width="8" height="8" viewBox="0 0 24 24"><path d="M6 19c0 1.1.9 2 2 2h8c1.1 0 2-.9 2-2V7H6v12zM19 4h-3.5l-1-1h-5l-1 1H5v2h14V4z" fill="#444"/></svg>
<div class="abs" style="left:3px;top:134.0px;width:169px;height:1px;background:#ececec"></div>
<div class="tx" style="left:55px;top:141px;font-size:5px;color:#999;">1 – 5 of 5 &nbsp;&nbsp;&nbsp;&nbsp; |‹ &nbsp;&nbsp; ‹ &nbsp;&nbsp; › &nbsp;&nbsp; ›|</div>
</div>
<div class="pan" style="left:362px;top:215px;width:354px;height:300px">
<div class="tx" style="left:7px;top:7px;font-size:6px;color:#333;">Alarms</div>
<svg class="abs" style="left:313px;top:6px" width="8" height="8" viewBox="0 0 24 24"><path d="M15.5 14h-.79l-.28-.27C15.41 12.59 16 11.11 16 9.5 16 5.91 13.09 3 9.5 3S3 5.91 3 9.5 5.91 16 9.5 16c1.61 0 3.09-.59 4.23-1.57l.27.28v.79l5 4.99L20.49 19l-4.99-5zm-6 0C7.01 14 5 11.99 5 9.5S7.01 5 9.5 5 14 7.01 14 9.5 11.99 14 9.5 14z" fill="#444"/></svg>
<svg class="abs" style="left:325px;top:6px" width="8" height="8" viewBox="0 0 24 24"><path d="M10 18h4v-2h-4v2zM3 6v2h18V6H3zm3 7h12v-2H6v2z" fill="#444"/></svg>
<svg class="abs" style="left:337px;top:6px" width="8" height="8" viewBox="0 0 24 24"><path d="M7 14H5v5h5v-2H7v-3zm-2-4h2V7h3V5H5v5zm12 7h-3v2h5v-5h-2v3zM14 5v2h3v3h2V5h-5z" fill="#444"/></svg>
<div class="tx" style="left:5px;top:19px;font-size:5px;color:#666;">◷ Realtime - last 30 days</div>
<div class="abs" style="left:9px;top:36px;width:7px;height:7px;border:1px solid #777"></div>
<div class="tx" style="left:26px;top:37px;font-size:4.5px;color:#888;">Created time ↓</div>
<div class="tx" style="left:88px;top:37px;font-size:4.5px;color:#888;">Originator</div>
<div class="tx" style="left:129px;top:37px;font-size:4.5px;color:#888;">Type</div>
<div class="tx" style="left:194px;top:37px;font-size:4.5px;color:#888;">Severity</div>
<div class="tx" style="left:230px;top:37px;font-size:4.5px;color:#888;">Status</div>
<div class="abs" style="left:3px;top:48px;width:348px;height:1px;background:#e5e5e5"></div>
<div class="abs" style="left:9px;top:56.0px;width:7px;height:7px;border:1px solid #777"></div>
<div class="tx" style="left:26px;top:56.0px;font-size:4.5px;color:#444;">2026-01-05 12:36:28</div>
<div class="tx" style="left:88px;top:56.0px;font-size:4.5px;color:#444;">Haul truck C</div>
<div class="tx" style="left:129px;top:56.0px;font-size:4.3px;color:#444;">Outside mine site perimeter</div>
<div class="tx" style="left:194px;top:56.0px;font-size:4.5px;color:#e53935;font-weight:bold;">Critical</div>
<div class="tx" style="left:230px;top:52.0px;font-size:4.5px;color:#444;">Active</div>
<div class="tx" style="left:230px;top:59.0px;font-size:4.5px;color:#444;">Unacknowledged</div>
<svg class="abs" style="left:297px;top:54.0px" width="8" height="8" viewBox="0 0 24 24"><path d="M6 10c-1.1 0-2 .9-2 2s.9 2 2 2 2-.9 2-2-.9-2-2-2zm12 0c-1.1 0-2 .9-2 2s.9 2 2 2 2-.9 2-2-.9-2-2-2zm-6 0c-1.1 0-2 .9-2 2s.9 2 2 2 2-.9 2-2-.9-2-2-2z" fill="#666"/></svg>
<svg class="abs" style="left:315px;top:54.0px" width="8" height="8" viewBox="0 0 24 24"><path d="M9 16.17L4.83 12l-1.42 1.41L9 19 21 7l-1.41-1.41z" fill="#666"/></svg>
<svg class="abs" style="left:332px;top:54.0px" width="8" height="8" viewBox="0 0 24 24"><path d="M19 6.41L17.59 5 12 10.59 6.41 5 5 6.41 10.59 12 5 17.59 6.41 19 12 13.41 17.59 19 19 17.59 13.41 12z" fill="#444"/></svg>
<div class="abs" style="left:3px;top:69.0px;width:348px;height:1px;background:#ececec"></div>
<div class="abs" style="left:9px;top:75.5px;width:7px;height:7px;border:1px solid #777"></div>
<div class="tx" style="left:26px;top:75.5px;font-size:4.5px;color:#444;">2026-01-05 12:36:28</div>
<div class="tx" style="left:88px;top:75.5px;font-size:4.5px;color:#444;">Haul truck B</div>
<div class="tx" style="left:129px;top:75.5px;font-size:4.3px;color:#444;">Overload</div>
<div class="tx" style="left:194px;top:75.5px;font-size:4.5px;color:#e53935;font-weight:bold;">Critical</div>
<div class="tx" style="left:230px;top:71.5px;font-size:4.5px;color:#444;">Active</div>
<div class="tx" style="left:230px;top:78.5px;font-size:4.5px;color:#444;">Unacknowledged</div>
<svg class="abs" style="left:297px;top:73.5px" width="8" height="8" viewBox="0 0 24 24"><path d="M6 10c-1.1 0-2 .9-2 2s.9 2 2 2 2-.9 2-2-.9-2-2-2zm12 0c-1.1 0-2 .9-2 2s.9 2 2 2 2-.9 2-2-.9-2-2-2zm-6 0c-1.1 0-2 .9-2 2s.9 2 2 2 2-.9 2-2-.9-2-2-2z" fill="#666"/></svg>
<svg class="abs" style="left:315px;top:73.5px" width="8" height="8" viewBox="0 0 24 24"><path d="M9 16.17L4.83 12l-1.42 1.41L9 19 21 7l-1.41-1.41z" fill="#666"/></svg>
<svg class="abs" style="left:332px;top:73.5px" width="8" height="8" viewBox="0 0 24 24"><path d="M19 6.41L17.59 5 12 10.59 6.41 5 5 6.41 10.59 12 5 17.59 6.41 19 12 13.41 17.59 19 19 17.59 13.41 12z" fill="#444"/></svg>
<div class="abs" style="left:3px;top:88.5px;width:348px;height:1px;background:#ececec"></div>
<div class="abs" style="left:9px;top:95.0px;width:7px;height:7px;border:1px solid #777"></div>
<div class="tx" style="left:26px;top:95.0px;font-size:4.5px;color:#444;">2026-01-05 12:36:28</div>
<div class="tx" style="left:88px;top:95.0px;font-size:4.5px;color:#444;">Haul truck C</div>
<div class="tx" style="left:129px;top:95.0px;font-size:4.3px;color:#444;">Low fuel level</div>
<div class="tx" style="left:194px;top:95.0px;font-size:4.5px;color:#f29900;font-weight:bold;">Major</div>
<div class="tx" style="left:230px;top:91.0px;font-size:4.5px;color:#444;">Active</div>
<div class="tx" style="left:230px;top:98.0px;font-size:4.5px;color:#444;">Unacknowledged</div>
<svg class="abs" style="left:297px;top:93.0px" width="8" height="8" viewBox="0 0 24 24"><path d="M6 10c-1.1 0-2 .9-2 2s.9 2 2 2 2-.9 2-2-.9-2-2-2zm12 0c-1.1 0-2 .9-2 2s.9 2 2 2 2-.9 2-2-.9-2-2-2zm-6 0c-1.1 0-2 .9-2 2s.9 2 2 2 2-.9 2-2-.9-2-2-2z" fill="#666"/></svg>
<svg class="abs" style="left:315px;top:93.0px" width="8" height="8" viewBox="0 0 24 24"><path d="M9 16.17L4.83 12l-1.42 1.41L9 19 21 7l-1.41-1.41z" fill="#666"/></svg>
<svg class="abs" style="left:332px;top:93.0px" width="8" height="8" viewBox="0 0 24 24"><path d="M19 6.41L17.59 5 12 10.59 6.41 5 5 6.41 10.59 12 5 17.59 6.41 19 12 13.41 17.59 19 19 17.59 13.41 12z" fill="#444"/></svg>
<div class="abs" style="left:3px;top:108.0px;width:348px;height:1px;background:#ececec"></div>
<div class="abs" style="left:9px;top:114.5px;width:7px;height:7px;border:1px solid #777"></div>
<div class="tx" style="left:26px;top:114.5px;font-size:4.5px;color:#444;">2026-01-05 12:36:28</div>
<div class="tx" style="left:88px;top:114.5px;font-size:4.5px;color:#444;">Excavator B</div>
<div class="tx" style="left:129px;top:114.5px;font-size:4.3px;color:#444;">Speed limit exceeded</div>
<div class="tx" style="left:194px;top:114.5px;font-size:4.5px;color:#e53935;font-weight:bold;">Critical</div>
<div class="tx" style="left:230px;top:110.5px;font-size:4.5px;color:#444;">Active</div>
<div class="tx" style="left:230px;top:117.5px;font-size:4.5px;color:#444;">Unacknowledged</div>
<svg class="abs" style="left:297px;top:112.5px" width="8" height="8" viewBox="0 0 24 24"><path d="M6 10c-1.1 0-2 .9-2 2s.9 2 2 2 2-.9 2-2-.9-2-2-2zm12 0c-1.1 0-2 .9-2 2s.9 2 2 2 2-.9 2-2-.9-2-2-2zm-6 0c-1.1 0-2 .9-2 2s.9 2 2 2 2-.9 2-2-.9-2-2-2z" fill="#666"/></svg>
<svg class="abs" style="left:315px;top:112.5px" width="8" height="8" viewBox="0 0 24 24"><path d="M9 16.17L4.83 12l-1.42 1.41L9 19 21 7l-1.41-1.41z" fill="#666"/></svg>
<svg class="abs" style="left:332px;top:112.5px" width="8" height="8" viewBox="0 0 24 24"><path d="M19 6.41L17.59 5 12 10.59 6.41 5 5 6.41 10.59 12 5 17.59 6.41 19 12 13.41 17.59 19 19 17.59 13.41 12z" fill="#444"/></svg>
<div class="abs" style="left:3px;top:127.5px;width:348px;height:1px;background:#ececec"></div>
</div>
</div>
</div>
<div class="card" style="left:813px;top:586px;width:761px;height:532px">
<div class="ctitle" style="letter-spacing:-0.58px">Fuel level monitoring</div>
<div class="prev" style="width:721px;height:500px">
<div class="ph" style="height:19px"></div>
<div class="tx" style="left:7px;top:5px;font-size:6.5px;color:#fff;font-weight:bold;">Fuel Level Monitoring</div>
<svg class="abs" style="left:619px;top:4px" width="10" height="10" viewBox="0 0 24 24"><path d="M11.99 2C6.47 2 2 6.48 2 12s4.47 10 9.99 10C17.52 22 22 17.52 22 12S17.52 2 11.99 2zM12 20c-4.42 0-8-3.58-8-8s3.58-8 8-8 8 3.58 8 8-3.58 8-8 8zm.5-13H11v6l5.25 3.15.75-1.23-4.5-2.67z" fill="#fff"/></svg>
<div class="tx" style="left:632px;top:6px;font-size:5.5px;color:#cfe;">Realtime - last 7 days</div>
<svg class="abs" style="left:698px;top:5px" width="9" height="9" viewBox="0 0 24 24"><path d="M19 9h-4V3H9v6H5l7 7 7-7zM5 18v2h14v-2H5z" fill="#fff"/></svg>
<div class="pan" style="left:3px;top:22px;width:400px;height:480px">
<svg class="abs" style="left:5px;top:5px" width="392" height="231" viewBox="0 0 392 231">
<rect width="392" height="231" fill="#ece6df"/>
<g fill="#e4d9cf">
<rect x="20" y="40" width="30" height="18" transform="rotate(-28 20 40)"/><rect x="60" y="20" width="35" height="15" transform="rotate(-28 60 20)"/><rect x="110" y="30" width="28" height="20" transform="rotate(-28 110 30)"/><rect x="160" y="10" width="40" height="18" transform="rotate(-28 160 10)"/><rect x="220" y="20" width="30" height="22" transform="rotate(-28 220 20)"/><rect x="280" y="5" width="35" height="18" transform="rotate(-28 280 5)"/><rect x="330" y="30" width="30" height="20" transform="rotate(-28 330 30)"/><rect x="30" y="90" width="40" height="20" transform="rotate(-28 30 90)"/><rect x="90" y="80" width="30" height="25" transform="rotate(-28 90 80)"/><rect x="150" y="70" width="38" height="18" transform="rotate(-28 150 70)"/><rect x="250" y="90" width="36" height="20" transform="rotate(-28 250 90)"/><rect x="320" y="80" width="28" height="22" transform="rotate(-28 320 80)"/><rect x="40" y="160" width="30" height="20" transform="rotate(-28 40 160)"/><rect x="100" y="150" width="36" height="24" transform="rotate(-28 100 150)"/><rect x="170" y="190" width="30" height="18" transform="rotate(-28 170 190)"/><rect x="240" y="160" width="40" height="20" transform="rotate(-28 240 160)"/><rect x="300" y="150" width="32" height="26" transform="rotate(-28 300 150)"/><rect x="350" y="190" width="30" height="20" transform="rotate(-28 350 190)"/><rect x="60" y="210" width="30" height="14" transform="rotate(-28 60 210)"/><rect x="200" y="220" width="34" height="14" transform="rotate(-28 200 220)"/><rect x="280" y="210" width="30" height="18" transform="rotate(-28 280 210)"/><rect x="120" y="110" width="30" height="18" transform="rotate(-28 120 110)"/><rect x="200" y="120" width="32" height="18" transform="rotate(-28 200 120)"/><rect x="340" y="120" width="30" height="16" transform="rotate(-28 340 120)"/>
</g>
<path d="M0 72 Q 80 110 150 160 L 270 231" fill="none" stroke="#e9c987" stroke-width="15"/>
<path d="M10 0 Q 25 60 12 110 L 0 160" fill="none" stroke="#e9c987" stroke-width="8"/>
<circle cx="36" cy="62" r="13" fill="none" stroke="#e9c987" stroke-width="4"/>
<g stroke="#fbfaf6" stroke-width="2.2" fill="none">
<path d="M0 20 L392 -180 M0 70 L392 -130 M0 130 L392 -70 M0 190 L392 -10 M20 231 L392 30 M120 231 L392 90 M220 231 L392 150 M320 231 L392 200"/>
<path d="M40 0 L200 231 M100 0 L260 231 M160 0 L320 231 M220 0 L380 231 M280 0 L392 160 M340 0 L392 80 M0 40 L130 231"/>
</g>
<g stroke="#f0dd9a" stroke-width="3" fill="none">
<path d="M120 231 L330 0 M0 170 L160 0 M250 231 L392 60"/>
</g>

<rect x="4" y="6" width="12" height="24" fill="#fff" fill-opacity=".8"/><text x="7" y="16" font-size="8" font-family="Liberation Sans" fill="#333">+</text><text x="8" y="27" font-size="8" font-family="Liberation Sans" fill="#333">−</text>
<g font-family="Liberation Sans" font-size="4.5" fill="#666"><text x="100" y="50">SOUTH PARK</text></g>
</svg>
<div class="abs" style="left:172px;top:54px;width:99px;height:109px;background:#fff;border-radius:4px;box-shadow:0 1px 4px rgba(0,0,0,.3)"></div>
<div class="tx" style="left:180px;top:62px;font-size:6px;color:#222;font-weight:bold;">Tank 1113</div>
<div class="tx" style="left:262px;top:62px;font-size:6px;color:#666;">×</div>
<div class="abs" style="left:177px;top:73px;width:90px;height:1px;background:#ddd"></div>
<div class="tx" style="left:180px;top:81px;font-size:4px;color:#888;">Liquid type</div>
<div class="tx" style="left:220px;top:81px;font-size:4.8px;color:#222;">Biodiesel B5 (5%)</div>
<div class="tx" style="left:180px;top:92px;font-size:4px;color:#888;">Remaining</div>
<div class="tx" style="left:220px;top:92px;font-size:4.8px;color:#222;">22.02% (202818L)</div>
<div class="tx" style="left:180px;top:103px;font-size:4px;color:#888;">Temperature</div>
<div class="tx" style="left:220px;top:103px;font-size:4.8px;color:#222;">19.6°C</div>
<div class="tx" style="left:180px;top:114px;font-size:4px;color:#888;">Battery level</div>
<div class="tx" style="left:220px;top:114px;font-size:4.8px;color:#e53935;">5%</div>
<div class="tx" style="left:180px;top:130.8px;font-size:4px;color:#888;">Connection</div>
<div class="tx" style="left:220px;top:130.8px;font-size:4.8px;color:#2e9e4f;">Online</div>
<div class="tx" style="left:180px;top:143.0px;font-size:4px;color:#888;">Last update</div>
<div class="tx" style="left:220px;top:143.0px;font-size:4.8px;color:#222;">22 Jun 2023 17:04</div>
<div class="tx" style="left:223px;top:150px;font-size:4.5px;color:#5b6bd6;">Details &gt;</div>
<div class="abs" style="left:207px;top:174px;width:12px;height:12px;border-radius:50%;background:#e53935"></div>
<div class="abs" style="left:218px;top:165px;width:7px;height:8px;background:#f2a23c;border-radius:1px"></div>
<div class="tx" style="left:9px;top:243px;font-size:6px;color:#333;font-weight:bold;">Filter alarms ▾</div>
<div class="tx" style="left:326px;top:243px;font-size:5.5px;color:#5b6bd6;font-weight:bold;">Disable all</div>
<div class="abs" style="left:357px;top:241px;width:36px;height:14px;border:1px solid #ddd;border-radius:2px"></div>
<div class="tx" style="left:363px;top:244px;font-size:5.5px;color:#5b6bd6;font-weight:bold;">Enable all</div>
<div class="abs" style="left:8px;top:262px;width:189px;height:70px;background:#f4f4f4;border-radius:4px"></div>
<svg class="abs" style="left:13px;top:267.5px" width="9" height="9" viewBox="0 0 24 24"><path d="M9 16.17L4.83 12l-1.42 1.41L9 19 21 7l-1.41-1.41z" fill="#333"/></svg>
<div class="tx" style="left:23px;top:268.5px;font-size:5.5px;color:#333;">No alarms</div>
<div class="abs" style="left:178px;top:267.5px;width:15px;height:9px;background:#8a86e0;border-radius:4.5px"></div>
<div class="abs" style="left:185px;top:268.5px;width:7px;height:7px;background:#fff;border-radius:50%"></div>
<svg class="abs" style="left:13px;top:287.8px" width="9" height="9" viewBox="0 0 24 24"><path d="M10 18h5V5h-5v13zm-6 0h5V5H4v13zM16 5v13h5V5h-5z" fill="#333"/></svg>
<div class="tx" style="left:23px;top:288.8px;font-size:5.5px;color:#333;">Low remaining level</div>
<div class="abs" style="left:178px;top:287.8px;width:15px;height:9px;background:#8a86e0;border-radius:4.5px"></div>
<div class="abs" style="left:185px;top:288.8px;width:7px;height:7px;background:#fff;border-radius:50%"></div>
<svg class="abs" style="left:13px;top:308.1px" width="9" height="9" viewBox="0 0 24 24"><path d="M14 2H6c-1.1 0-2 .9-2 2v16c0 1.1.9 2 2 2h12c1.1 0 2-.9 2-2V8l-6-6zm-1 15l-4-4h3V9h2v4h3l-4 4z" fill="#333"/></svg>
<div class="tx" style="left:23px;top:309.1px;font-size:5.5px;color:#333;">Low battery</div>
<div class="abs" style="left:178px;top:308.1px;width:15px;height:9px;background:#8a86e0;border-radius:4.5px"></div>
<div class="abs" style="left:185px;top:309.1px;width:7px;height:7px;background:#fff;border-radius:50%"></div>
<div class="abs" style="left:202px;top:262px;width:192px;height:70px;background:#f4f4f4;border-radius:4px"></div>
<svg class="abs" style="left:207px;top:267.5px" width="9" height="9" viewBox="0 0 24 24"><path d="M3.5 18.49l6-6.01 4 4L22 6.92l-1.41-1.41-7.09 7.97-4-4L2 16.99z" fill="#333"/></svg>
<div class="tx" style="left:217px;top:268.5px;font-size:5.5px;color:#333;">Low temperature</div>
<div class="abs" style="left:375px;top:267.5px;width:15px;height:9px;background:#8a86e0;border-radius:4.5px"></div>
<div class="abs" style="left:382px;top:268.5px;width:7px;height:7px;background:#fff;border-radius:50%"></div>
<svg class="abs" style="left:207px;top:287.8px" width="9" height="9" viewBox="0 0 24 24"><path d="M3.5 18.49l6-6.01 4 4L22 6.92l-1.41-1.41-7.09 7.97-4-4L2 16.99z" fill="#333"/></svg>
<div class="tx" style="left:217px;top:288.8px;font-size:5.5px;color:#333;">High temperature</div>
<div class="abs" style="left:375px;top:287.8px;width:15px;height:9px;background:#8a86e0;border-radius:4.5px"></div>
<div class="abs" style="left:382px;top:288.8px;width:7px;height:7px;background:#fff;border-radius:50%"></div>
<svg class="abs" style="left:207px;top:308.1px" width="9" height="9" viewBox="0 0 24 24"><path d="M10 18h4v-2h-4v2zM3 6v2h18V6H3zm3 7h12v-2H6v2z" fill="#333"/></svg>
<div class="tx" style="left:217px;top:309.1px;font-size:5.5px;color:#333;">Offline</div>
<div class="abs" style="left:375px;top:308.1px;width:15px;height:9px;background:#8a86e0;border-radius:4.5px"></div>
<div class="abs" style="left:382px;top:309.1px;width:7px;height:7px;background:#fff;border-radius:50%"></div>
</div>
<div class="pan" style="left:409px;top:25px;width:306px;height:164px">
<div class="tx" style="left:7px;top:8px;font-size:6px;color:#333;font-weight:bold;">Tanks</div>
<svg class="abs" style="left:253px;top:6px" width="8" height="8" viewBox="0 0 24 24"><path d="M19 13h-6v6h-2v-6H5v-2h6V5h2v6h6v2z" fill="#999"/></svg>
<svg class="abs" style="left:265px;top:6px" width="8" height="8" viewBox="0 0 24 24"><path d="M15.5 14h-.79l-.28-.27C15.41 12.59 16 11.11 16 9.5 16 5.91 13.09 3 9.5 3S3 5.91 3 9.5 5.91 16 9.5 16c1.61 0 3.09-.59 4.23-1.57l.27.28v.79l5 4.99L20.49 19l-4.99-5zm-6 0C7.01 14 5 11.99 5 9.5S7.01 5 9.5 5 14 7.01 14 9.5 11.99 14 9.5 14z" fill="#999"/></svg>
<svg class="abs" style="left:277px;top:6px" width="8" height="8" viewBox="0 0 24 24"><path d="M14 2H6c-1.1 0-2 .9-2 2v16c0 1.1.9 2 2 2h12c1.1 0 2-.9 2-2V8l-6-6zm-1 15l-4-4h3V9h2v4h3l-4 4z" fill="#777"/></svg>
<svg class="abs" style="left:289px;top:6px" width="8" height="8" viewBox="0 0 24 24"><path d="M7 14H5v5h5v-2H7v-3zm-2-4h2V7h3V5H5v5zm12 7h-3v2h5v-5h-2v3zM14 5v2h3v3h2V5h-5z" fill="#999"/></svg>
<div class="tx" style="left:7px;top:25px;font-size:4px;color:#888;">Tank</div>
<div class="tx" style="left:34px;top:25px;font-size:4px;color:#888;">Remaining, %</div>
<div class="tx" style="left:138px;top:25px;font-size:4px;color:#888;">Temperature</div>
<div class="tx" style="left:180px;top:25px;font-size:4px;color:#888;">Battery</div>
<div class="tx" style="left:210px;top:25px;font-size:4px;color:#888;">Connection</div>
<div class="abs" style="left:3px;top:36px;width:292px;height:1px;background:#e5e5e5"></div>
<div class="tx" style="left:7px;top:42.0px;font-size:4.5px;color:#444;">Tank</div>
<div class="tx" style="left:7px;top:48.0px;font-size:4.5px;color:#444;">1491</div>
<div class="tx" style="left:34px;top:45.0px;font-size:4.5px;color:#444;">80% (42146L)</div>
<div class="abs" style="left:88px;top:45.0px;width:37px;height:6px;background:#f2f4ff;border-radius:1px"></div>
<div class="abs" style="left:88px;top:45.0px;width:29px;height:6px;background:#a9a6f0;border-radius:1px"></div>
<div class="tx" style="left:138px;top:45.0px;font-size:4.5px;color:#444;">24°C</div>
<div class="tx" style="left:180px;top:45.0px;font-size:4.5px;color:#444;">76%</div>
<div class="abs" style="left:210px;top:43.0px;width:20px;height:9px;background:#d9f0e3;border-radius:2px"></div>
<div class="tx" style="left:212px;top:45.0px;font-size:4.3px;color:#2e9e4f;font-weight:bold;">Online</div>
<svg class="abs" style="left:267px;top:43.0px" width="9" height="9" viewBox="0 0 24 24"><path d="M3 17.25V21h3.75L17.81 9.94l-3.75-3.75L3 17.25zM20.71 7.04c.39-.39.39-1.02 0-1.41l-2.34-2.34c-.39-.39-1.02-.39-1.41 0l-1.83 1.83 3.75 3.75 1.83-1.83z" fill="#555"/></svg>
<svg class="abs" style="left:285px;top:43.0px" width="9" height="9" viewBox="0 0 24 24"><path d="M6 19c0 1.1.9 2 2 2h8c1.1 0 2-.9 2-2V7H6v12zM19 4h-3.5l-1-1h-5l-1 1H5v2h14V4z" fill="#555"/></svg>
<div class="tx" style="left:7px;top:61.5px;font-size:4.5px;color:#444;">Tank</div>
<div class="tx" style="left:7px;top:67.5px;font-size:4.5px;color:#444;">1133</div>
<div class="tx" style="left:34px;top:64.5px;font-size:4.5px;color:#e53935;">3% (4505L)</div>
<div class="abs" style="left:88px;top:64.5px;width:37px;height:6px;background:#f2f4ff;border-radius:1px"></div>
<div class="abs" style="left:88px;top:64.5px;width:1px;height:6px;background:#e53935;border-radius:1px"></div>
<div class="tx" style="left:138px;top:64.5px;font-size:4.5px;color:#444;">8°C</div>
<div class="tx" style="left:180px;top:64.5px;font-size:4.5px;color:#444;">59%</div>
<div class="abs" style="left:210px;top:62.5px;width:20px;height:9px;background:#d9f0e3;border-radius:2px"></div>
<div class="tx" style="left:212px;top:64.5px;font-size:4.3px;color:#2e9e4f;font-weight:bold;">Online</div>
<svg class="abs" style="left:267px;top:62.5px" width="9" height="9" viewBox="0 0 24 24"><path d="M3 17.25V21h3.75L17.81 9.94l-3.75-3.75L3 17.25zM20.71 7.04c.39-.39.39-1.02 0-1.41l-2.34-2.34c-.39-.39-1.02-.39-1.41 0l-1.83 1.83 3.75 3.75 1.83-1.83z" fill="#555"/></svg>
<svg class="abs" style="left:285px;top:62.5px" width="9" height="9" viewBox="0 0 24 24"><path d="M6 19c0 1.1.9 2 2 2h8c1.1 0 2-.9 2-2V7H6v12zM19 4h-3.5l-1-1h-5l-1 1H5v2h14V4z" fill="#555"/></svg>
<div class="tx" style="left:7px;top:81.0px;font-size:4.5px;color:#444;">Tank</div>
<div class="tx" style="left:7px;top:87.0px;font-size:4.5px;color:#444;">1305</div>
<div class="tx" style="left:34px;top:84.0px;font-size:4.5px;color:#444;">56% (16084L)</div>
<div class="abs" style="left:88px;top:84.0px;width:37px;height:6px;background:#f2f4ff;border-radius:1px"></div>
<div class="abs" style="left:88px;top:84.0px;width:20px;height:6px;background:#a9a6f0;border-radius:1px"></div>
<div class="tx" style="left:138px;top:84.0px;font-size:4.5px;color:#444;">18°C</div>
<div class="tx" style="left:180px;top:84.0px;font-size:4.5px;color:#444;">44%</div>
<div class="abs" style="left:210px;top:82.0px;width:20px;height:9px;background:#d9f0e3;border-radius:2px"></div>
<div class="tx" style="left:212px;top:84.0px;font-size:4.3px;color:#2e9e4f;font-weight:bold;">Online</div>
<svg class="abs" style="left:267px;top:82.0px" width="9" height="9" viewBox="0 0 24 24"><path d="M3 17.25V21h3.75L17.81 9.94l-3.75-3.75L3 17.25zM20.71 7.04c.39-.39.39-1.02 0-1.41l-2.34-2.34c-.39-.39-1.02-.39-1.41 0l-1.83 1.83 3.75 3.75 1.83-1.83z" fill="#555"/></svg>
<svg class="abs" style="left:285px;top:82.0px" width="9" height="9" viewBox="0 0 24 24"><path d="M6 19c0 1.1.9 2 2 2h8c1.1 0 2-.9 2-2V7H6v12zM19 4h-3.5l-1-1h-5l-1 1H5v2h14V4z" fill="#555"/></svg>
<div class="tx" style="left:7px;top:100.5px;font-size:4.5px;color:#444;">Tank</div>
<div class="tx" style="left:7px;top:106.5px;font-size:4.5px;color:#444;">1288</div>
<div class="tx" style="left:34px;top:103.5px;font-size:4.5px;color:#444;">40% (13214L)</div>
<div class="abs" style="left:88px;top:103.5px;width:37px;height:6px;background:#f2f4ff;border-radius:1px"></div>
<div class="abs" style="left:88px;top:103.5px;width:14px;height:6px;background:#a9a6f0;border-radius:1px"></div>
<div class="tx" style="left:138px;top:103.5px;font-size:4.5px;color:#e53935;">82°C</div>
<div class="tx" style="left:180px;top:103.5px;font-size:4.5px;color:#444;">53%</div>
<div class="abs" style="left:210px;top:101.5px;width:20px;height:9px;background:#d9f0e3;border-radius:2px"></div>
<div class="tx" style="left:212px;top:103.5px;font-size:4.3px;color:#2e9e4f;font-weight:bold;">Online</div>
<svg class="abs" style="left:267px;top:101.5px" width="9" height="9" viewBox="0 0 24 24"><path d="M3 17.25V21h3.75L17.81 9.94l-3.75-3.75L3 17.25zM20.71 7.04c.39-.39.39-1.02 0-1.41l-2.34-2.34c-.39-.39-1.02-.39-1.41 0l-1.83 1.83 3.75 3.75 1.83-1.83z" fill="#555"/></svg>
<svg class="abs" style="left:285px;top:101.5px" width="9" height="9" viewBox="0 0 24 24"><path d="M6 19c0 1.1.9 2 2 2h8c1.1 0 2-.9 2-2V7H6v12zM19 4h-3.5l-1-1h-5l-1 1H5v2h14V4z" fill="#555"/></svg>
<div class="tx" style="left:7px;top:120.0px;font-size:4.5px;color:#444;">Tank</div>
<div class="tx" style="left:7px;top:126.0px;font-size:4.5px;color:#444;">1113</div>
<div class="tx" style="left:34px;top:123.0px;font-size:4.5px;color:#444;">22% (202818L)</div>
<div class="abs" style="left:88px;top:123.0px;width:37px;height:6px;background:#f2f4ff;border-radius:1px"></div>
<div class="abs" style="left:88px;top:123.0px;width:8px;height:6px;background:#a9a6f0;border-radius:1px"></div>
<div class="tx" style="left:138px;top:123.0px;font-size:4.5px;color:#444;">20°C</div>
<div class="tx" style="left:180px;top:123.0px;font-size:4.5px;color:#e53935;">5%</div>
<div class="abs" style="left:210px;top:121.0px;width:20px;height:9px;background:#d9f0e3;border-radius:2px"></div>
<div class="tx" style="left:212px;top:123.0px;font-size:4.3px;color:#2e9e4f;font-weight:bold;">Online</div>
<svg class="abs" style="left:267px;top:121.0px" width="9" height="9" viewBox="0 0 24 24"><path d="M3 17.25V21h3.75L17.81 9.94l-3.75-3.75L3 17.25zM20.71 7.04c.39-.39.39-1.02 0-1.41l-2.34-2.34c-.39-.39-1.02-.39-1.41 0l-1.83 1.83 3.75 3.75 1.83-1.83z" fill="#555"/></svg>
<svg class="abs" style="left:285px;top:121.0px" width="9" height="9" viewBox="0 0 24 24"><path d="M6 19c0 1.1.9 2 2 2h8c1.1 0 2-.9 2-2V7H6v12zM19 4h-3.5l-1-1h-5l-1 1H5v2h14V4z" fill="#555"/></svg>
<div class="tx" style="left:7px;top:139.5px;font-size:4.5px;color:#444;">Tank</div>
<div class="tx" style="left:7px;top:145.5px;font-size:4.5px;color:#444;">1273</div>
<div class="tx" style="left:34px;top:142.5px;font-size:4.5px;color:#444;">92% (8598Gal)</div>
<div class="abs" style="left:88px;top:142.5px;width:37px;height:6px;background:#f2f4ff;border-radius:1px"></div>
<div class="abs" style="left:88px;top:142.5px;width:34px;height:6px;background:#a9a6f0;border-radius:1px"></div>
<div class="tx" style="left:138px;top:142.5px;font-size:4.5px;color:#444;">14°C</div>
<div class="tx" style="left:180px;top:142.5px;font-size:4.5px;color:#444;">26%</div>
<div class="abs" style="left:210px;top:140.5px;width:20px;height:9px;background:#d9f0e3;border-radius:2px"></div>
<div class="tx" style="left:212px;top:142.5px;font-size:4.3px;color:#2e9e4f;font-weight:bold;">Online</div>
<svg class="abs" style="left:267px;top:140.5px" width="9" height="9" viewBox="0 0 24 24"><path d="M3 17.25V21h3.75L17.81 9.94l-3.75-3.75L3 17.25zM20.71 7.04c.39-.39.39-1.02 0-1.41l-2.34-2.34c-.39-.39-1.02-.39-1.41 0l-1.83 1.83 3.75 3.75 1.83-1.83z" fill="#555"/></svg>
<svg class="abs" style="left:285px;top:140.5px" width="9" height="9" viewBox="0 0 24 24"><path d="M6 19c0 1.1.9 2 2 2h8c1.1 0 2-.9 2-2V7H6v12zM19 4h-3.5l-1-1h-5l-1 1H5v2h14V4z" fill="#555"/></svg>
<div class="abs" style="left:298px;top:33px;width:2px;height:110px;background:#ccc"></div>
</div>
<div class="pan" style="left:409px;top:195px;width:306px;height:310px">
<div class="tx" style="left:7px;top:8px;font-size:6px;color:#333;font-weight:bold;">Alarms</div>
<svg class="abs" style="left:241px;top:6px" width="8" height="8" viewBox="0 0 24 24"><path d="M19.14 12.94c.04-.3.06-.61.06-.94 0-.32-.02-.64-.07-.94l2.03-1.58a.49.49 0 0 0 .12-.61l-1.92-3.32a.488.488 0 0 0-.59-.22l-2.39.96c-.5-.38-1.03-.7-1.62-.94l-.36-2.54a.484.484 0 0 0-.48-.41h-3.84c-.24 0-.43.17-.47.41l-.36 2.54c-.59.24-1.13.57-1.62.94l-2.39-.96c-.22-.08-.47 0-.59.22L2.74 8.87c-.12.21-.08.47.12.61l2.03 1.58c-.05.3-.09.63-.09.94s.02.64.07.94l-2.03 1.58a.49.49 0 0 0-.12.61l1.92 3.32c.12.22.37.29.59.22l2.39-.96c.5.38 1.03.7 1.62.94l.36 2.54c.05.24.24.41.48.41h3.84c.24 0 .44-.17.47-.41l.36-2.54c.59-.24 1.13-.56 1.62-.94l2.39.96c.22.08.47 0 .59-.22l1.92-3.32c.12-.22.07-.47-.12-.61l-2.01-1.58zM12 15.6c-1.98 0-3.6-1.62-3.6-3.6s1.62-3.6 3.6-3.6 3.6 1.62 3.6 3.6-1.62 3.6-3.6 3.6z" fill="#888"/></svg>
<svg class="abs" style="left:253px;top:6px" width="8" height="8" viewBox="0 0 24 24"><path d="M15.5 14h-.79l-.28-.27C15.41 12.59 16 11.11 16 9.5 16 5.91 13.09 3 9.5 3S3 5.91 3 9.5 5.91 16 9.5 16c1.61 0 3.09-.59 4.23-1.57l.27.28v.79l5 4.99L20.49 19l-4.99-5zm-6 0C7.01 14 5 11.99 5 9.5S7.01 5 9.5 5 14 7.01 14 9.5 11.99 14 9.5 14z" fill="#999"/></svg>
<svg class="abs" style="left:265px;top:6px" width="8" height="8" viewBox="0 0 24 24"><path d="M10 18h4v-2h-4v2zM3 6v2h18V6H3zm3 7h12v-2H6v2z" fill="#999"/></svg>
<svg class="abs" style="left:277px;top:6px" width="8" height="8" viewBox="0 0 24 24"><path d="M14 2H6c-1.1 0-2 .9-2 2v16c0 1.1.9 2 2 2h12c1.1 0 2-.9 2-2V8l-6-6zm-1 15l-4-4h3V9h2v4h3l-4 4z" fill="#777"/></svg>
<svg class="abs" style="left:289px;top:6px" width="8" height="8" viewBox="0 0 24 24"><path d="M7 14H5v5h5v-2H7v-3zm-2-4h2V7h3V5H5v5zm12 7h-3v2h5v-5h-2v3zM14 5v2h3v3h2V5h-5z" fill="#999"/></svg>
<div class="tx" style="left:7px;top:23px;font-size:4px;color:#888;">Tank</div>
<div class="tx" style="left:41px;top:23px;font-size:4px;color:#888;">Created time ↓</div>
<div class="tx" style="left:110px;top:23px;font-size:4px;color:#888;">Type</div>
<div class="tx" style="left:186px;top:23px;font-size:4px;color:#888;">Details</div>
<div class="abs" style="left:3px;top:33px;width:292px;height:1px;background:#e5e5e5"></div>
<div class="tx" style="left:7px;top:41.0px;font-size:4.5px;color:#444;">Tank 1471</div>
<div class="tx" style="left:41px;top:41.0px;font-size:4.5px;color:#444;">2023-06-22 17:04:18</div>
<div class="tx" style="left:110px;top:41.0px;font-size:4.5px;color:#444;">Low Battery Level</div>
<div class="tx" style="left:186px;top:41.0px;font-size:4.5px;color:#e53935;">16.7%</div>
<svg class="abs" style="left:251px;top:40.0px" width="8" height="8" viewBox="0 0 24 24"><path d="M21.99 4c0-1.1-.89-2-1.99-2H4c-1.1 0-2 .9-2 2v12c0 1.1.9 2 2 2h14l4 4-.01-18zM18 14H6v-2h12v2zm0-3H6V9h12v2zm0-3H6V6h12v2z" fill="#777"/></svg>
<svg class="abs" style="left:268px;top:40.0px" width="8" height="8" viewBox="0 0 24 24"><path d="M6 10c-1.1 0-2 .9-2 2s.9 2 2 2 2-.9 2-2-.9-2-2-2zm12 0c-1.1 0-2 .9-2 2s.9 2 2 2 2-.9 2-2-.9-2-2-2zm-6 0c-1.1 0-2 .9-2 2s.9 2 2 2 2-.9 2-2-.9-2-2-2z" fill="#888"/></svg>
<svg class="abs" style="left:285px;top:40.0px" width="8" height="8" viewBox="0 0 24 24"><path d="M19 6.41L17.59 5 12 10.59 6.41 5 5 6.41 10.59 12 5 17.59 6.41 19 12 13.41 17.59 19 19 17.59 13.41 12z" fill="#555"/></svg>
<div class="tx" style="left:7px;top:60.5px;font-size:4.5px;color:#444;">Tank 1289</div>
<div class="tx" style="left:41px;top:60.5px;font-size:4.5px;color:#444;">2023-06-22 17:04:18</div>
<div class="tx" style="left:110px;top:60.5px;font-size:4.5px;color:#444;">Low Battery Level</div>
<div class="tx" style="left:186px;top:60.5px;font-size:4.5px;color:#e53935;">8.1%</div>
<svg class="abs" style="left:251px;top:59.5px" width="8" height="8" viewBox="0 0 24 24"><path d="M21.99 4c0-1.1-.89-2-1.99-2H4c-1.1 0-2 .9-2 2v12c0 1.1.9 2 2 2h14l4 4-.01-18zM18 14H6v-2h12v2zm0-3H6V9h12v2zm0-3H6V6h12v2z" fill="#777"/></svg>
<svg class="abs" style="left:268px;top:59.5px" width="8" height="8" viewBox="0 0 24 24"><path d="M6 10c-1.1 0-2 .9-2 2s.9 2 2 2 2-.9 2-2-.9-2-2-2zm12 0c-1.1 0-2 .9-2 2s.9 2 2 2 2-.9 2-2-.9-2-2-2zm-6 0c-1.1 0-2 .9-2 2s.9 2 2 2 2-.9 2-2-.9-2-2-2z" fill="#888"/></svg>
<svg class="abs" style="left:285px;top:59.5px" width="8" height="8" viewBox="0 0 24 24"><path d="M19 6.41L17.59 5 12 10.59 6.41 5 5 6.41 10.59 12 5 17.59 6.41 19 12 13.41 17.59 19 19 17.59 13.41 12z" fill="#555"/></svg>
<div class="tx" style="left:7px;top:80.0px;font-size:4.5px;color:#444;">Tank 1288</div>
<div class="tx" style="left:41px;top:80.0px;font-size:4.5px;color:#444;">2023-06-22 17:04:17</div>
<div class="tx" style="left:110px;top:80.0px;font-size:4.5px;color:#444;">High Temperature</div>
<div class="tx" style="left:186px;top:80.0px;font-size:4.5px;color:#e53935;">82°C</div>
<svg class="abs" style="left:251px;top:79.0px" width="8" height="8" viewBox="0 0 24 24"><path d="M21.99 4c0-1.1-.89-2-1.99-2H4c-1.1 0-2 .9-2 2v12c0 1.1.9 2 2 2h14l4 4-.01-18zM18 14H6v-2h12v2zm0-3H6V9h12v2zm0-3H6V6h12v2z" fill="#777"/></svg>
<svg class="abs" style="left:268px;top:79.0px" width="8" height="8" viewBox="0 0 24 24"><path d="M6 10c-1.1 0-2 .9-2 2s.9 2 2 2 2-.9 2-2-.9-2-2-2zm12 0c-1.1 0-2 .9-2 2s.9 2 2 2 2-.9 2-2-.9-2-2-2zm-6 0c-1.1 0-2 .9-2 2s.9 2 2 2 2-.9 2-2-.9-2-2-2z" fill="#888"/></svg>
<svg class="abs" style="left:285px;top:79.0px" width="8" height="8" viewBox="0 0 24 24"><path d="M19 6.41L17.59 5 12 10.59 6.41 5 5 6.41 10.59 12 5 17.59 6.41 19 12 13.41 17.59 19 19 17.59 13.41 12z" fill="#555"/></svg>
<div class="tx" style="left:7px;top:99.5px;font-size:4.5px;color:#444;">Tank 1133</div>
<div class="tx" style="left:41px;top:99.5px;font-size:4.5px;color:#444;">2023-06-22 17:04:17</div>
<div class="tx" style="left:110px;top:99.5px;font-size:4.5px;color:#444;">Low Fuel Level</div>
<div class="tx" style="left:186px;top:99.5px;font-size:4.5px;color:#e53935;">2.73%</div>
<svg class="abs" style="left:251px;top:98.5px" width="8" height="8" viewBox="0 0 24 24"><path d="M21.99 4c0-1.1-.89-2-1.99-2H4c-1.1 0-2 .9-2 2v12c0 1.1.9 2 2 2h14l4 4-.01-18zM18 14H6v-2h12v2zm0-3H6V9h12v2zm0-3H6V6h12v2z" fill="#777"/></svg>
<svg class="abs" style="left:268px;top:98.5px" width="8" height="8" viewBox="0 0 24 24"><path d="M6 10c-1.1 0-2 .9-2 2s.9 2 2 2 2-.9 2-2-.9-2-2-2zm12 0c-1.1 0-2 .9-2 2s.9 2 2 2 2-.9 2-2-.9-2-2-2zm-6 0c-1.1 0-2 .9-2 2s.9 2 2 2 2-.9 2-2-.9-2-2-2z" fill="#888"/></svg>
<svg class="abs" style="left:285px;top:98.5px" width="8" height="8" viewBox="0 0 24 24"><path d="M19 6.41L17.59 5 12 10.59 6.41 5 5 6.41 10.59 12 5 17.59 6.41 19 12 13.41 17.59 19 19 17.59 13.41 12z" fill="#555"/></svg>
<div class="tx" style="left:7px;top:119.0px;font-size:4.5px;color:#444;">Tank 1113</div>
<div class="tx" style="left:41px;top:119.0px;font-size:4.5px;color:#444;">2023-06-22 17:04:17</div>
<div class="tx" style="left:110px;top:119.0px;font-size:4.5px;color:#444;">Low Battery Level</div>
<div class="tx" style="left:186px;top:119.0px;font-size:4.5px;color:#e53935;">5%</div>
<svg class="abs" style="left:251px;top:118.0px" width="8" height="8" viewBox="0 0 24 24"><path d="M21.99 4c0-1.1-.89-2-1.99-2H4c-1.1 0-2 .9-2 2v12c0 1.1.9 2 2 2h14l4 4-.01-18zM18 14H6v-2h12v2zm0-3H6V9h12v2zm0-3H6V6h12v2z" fill="#777"/></svg>
<svg class="abs" style="left:268px;top:118.0px" width="8" height="8" viewBox="0 0 24 24"><path d="M6 10c-1.1 0-2 .9-2 2s.9 2 2 2 2-.9 2-2-.9-2-2-2zm12 0c-1.1 0-2 .9-2 2s.9 2 2 2 2-.9 2-2-.9-2-2-2zm-6 0c-1.1 0-2 .9-2 2s.9 2 2 2 2-.9 2-2-.9-2-2-2z" fill="#888"/></svg>
<svg class="abs" style="left:285px;top:118.0px" width="8" height="8" viewBox="0 0 24 24"><path d="M19 6.41L17.59 5 12 10.59 6.41 5 5 6.41 10.59 12 5 17.59 6.41 19 12 13.41 17.59 19 19 17.59 13.41 12z" fill="#555"/></svg>
</div>
</div>
</div>
</div>
<div id="mscroll"></div>

<div id="overlay"></div>
<div id="prog"></div><div id="progbar"></div>
<div class="abs" style="left:1602px;top:15px;width:20px;height:20px;border-radius:10px;background:#c4261e;color:#d0d0d0;font-size:12px;font-weight:bold;text-align:center;line-height:20px">2</div>
<svg class="abs" style="left:0;top:0" width="1920" height="1080" viewBox="0 0 1920 1080">
<defs><pattern id="dots" width="6" height="6" patternUnits="userSpaceOnUse"><circle cx="1.5" cy="1.5" r=".6" fill="#fff" fill-opacity=".8"/><circle cx="4.5" cy="4.5" r=".6" fill="#fff" fill-opacity=".8"/></pattern></defs>
<path d="M1672 877 L1601 929 L1587 940 L1556 993 L1556 1080 L1860 1080 L1860 940 L1754 929 Z" fill="#b4d2b4" fill-opacity=".07"/>
<path d="M1672 877 L1601 929 L1587 940 L1556 993 L1556 1080 L1860 1080 L1860 940 L1754 929 Z" fill="url(#dots)"/>
</svg>
<div id="dlg">
  <div id="dlgh"><div id="dlgt">Installing solution template...</div></div>
  <div id="dbuf"></div><div id="dbar"></div>
</div>
</body></html>
